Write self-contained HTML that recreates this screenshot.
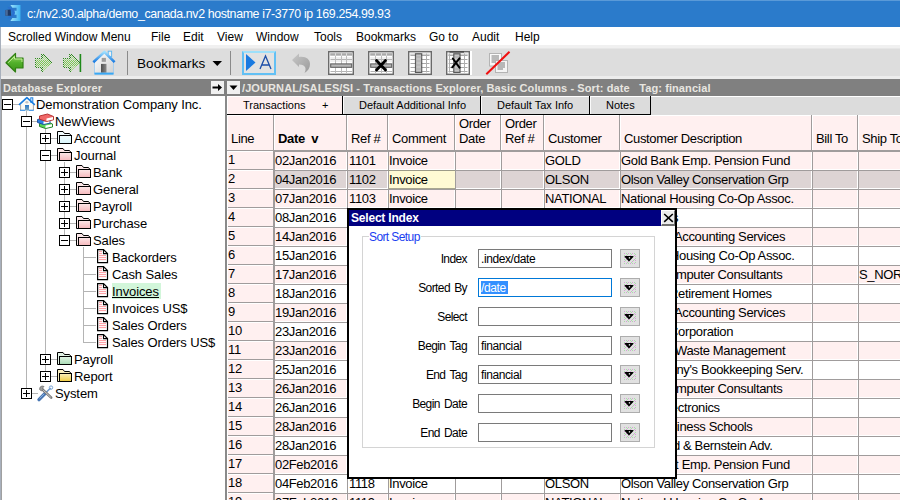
<!DOCTYPE html><html><head><meta charset="utf-8"><style>
*{margin:0;padding:0;box-sizing:border-box}
html,body{width:900px;height:500px;overflow:hidden;background:#fff;font-family:"Liberation Sans",sans-serif}
.a{position:absolute;white-space:nowrap}
svg{position:absolute;overflow:visible}
.t{font-size:13px;line-height:13px;color:#000;letter-spacing:-0.1px}
.c{font-size:13px;line-height:13px;color:#000;letter-spacing:-0.35px}
.tab{font-size:11px;line-height:11px;color:#000}
.lab{font-size:12px;line-height:12px;color:#000;letter-spacing:-0.6px}
</style></head><body>
<div class="a" style="left:0;top:0;width:900px;height:27px;background:#2b7bcb"></div>
<div class="a" style="left:27px;top:7.5px;font-size:12.4px;line-height:12px;color:#fff;letter-spacing:-0.38px;word-spacing:0px">c:/nv2.30.alpha/demo_canada.nv2 hostname i7-3770 ip 169.254.99.93</div>
<svg style="left:2px;top:2px" width="24" height="22" viewBox="0 0 24 22"><defs><linearGradient id="gi" x1="0" y1="0" x2="1" y2="0"><stop offset="0" stop-color="#a0e4fc"/><stop offset="1" stop-color="#3cb0f0"/></linearGradient></defs><path d="M8.4 3 H18.5 V19 H8.4 L10.4 16 H14.6 V12.8 H11.8 V8.8 H14.6 V5.7 H10.4Z" fill="url(#gi)"/><path d="M5.5 4.8 Q13 6.5 13 10.8 Q13 15 5.5 16.8 L7.2 14.4 Q10.6 13.4 10.6 10.8 Q10.6 8.2 7.2 7.4Z" fill="#2a70d0"/><path d="M3.5 8 L8.6 7.6 L9.2 13.7 L3.5 13.7Z" fill="#1e3864"/><path d="M3.5 8 L5.8 7.9 L5.8 13.7 L3.5 13.7Z" fill="#4a6a98"/></svg>
<div class="a" style="left:0;top:27px;width:900px;height:18px;background:#fff"></div>
<div class="a" style="left:8px;top:31px;font-size:12px;line-height:12px">Scrolled Window Menu</div>
<div class="a" style="left:151px;top:31px;font-size:12px;line-height:12px">File</div>
<div class="a" style="left:183px;top:31px;font-size:12px;line-height:12px">Edit</div>
<div class="a" style="left:217px;top:31px;font-size:12px;line-height:12px">View</div>
<div class="a" style="left:256px;top:31px;font-size:12px;line-height:12px">Window</div>
<div class="a" style="left:314px;top:31px;font-size:12px;line-height:12px">Tools</div>
<div class="a" style="left:356px;top:31px;font-size:12px;line-height:12px">Bookmarks</div>
<div class="a" style="left:429px;top:31px;font-size:12px;line-height:12px">Go to</div>
<div class="a" style="left:472px;top:31px;font-size:12px;line-height:12px">Audit</div>
<div class="a" style="left:515px;top:31px;font-size:12px;line-height:12px">Help</div>
<div class="a" style="left:0;top:45px;width:900px;height:34px;background:#dddddd"></div>
<div class="a" style="left:0;top:45px;width:900px;height:3px;background:#f0f0f0"></div><div class="a" style="left:0;top:48px;width:900px;height:1px;background:#e6e6e6"></div>
<div class="a" style="left:0;top:76px;width:900px;height:3px;background:#ececec"></div>
<svg style="left:5px;top:52px" width="20" height="22" viewBox="0 0 20 22"><defs><linearGradient id="gb" x1="0" y1="0" x2="0" y2="1"><stop offset="0" stop-color="#a8e070"/><stop offset="0.5" stop-color="#52b02a"/><stop offset="1" stop-color="#3a9418"/></linearGradient></defs><path d="M1 10.7 L10.5 1.5 V6 H18 V16 H10.5 V20 Z" fill="url(#gb)" stroke="#2f7f12" stroke-width="1.2" stroke-linejoin="round"/><path d="M3.2 10.7 L9.5 4.5 V7 H17 V10" fill="none" stroke="#c8f0a0" stroke-width="0.9"/></svg>
<svg style="left:35px;top:54px" width="20" height="20" viewBox="0 0 20 20"><rect x="6" y="0" width="1" height="1" fill="#2f8a1e"/><rect x="8" y="0" width="1" height="1" fill="#2f8a1e"/><rect x="7" y="1" width="1" height="1" fill="#2f8a1e"/><rect x="9" y="1" width="1" height="1" fill="#2f8a1e"/><rect x="6" y="2" width="1" height="1" fill="#2f8a1e"/><rect x="8" y="2" width="1" height="1" fill="#a8dc88"/><rect x="10" y="2" width="1" height="1" fill="#2f8a1e"/><rect x="7" y="3" width="1" height="1" fill="#2f8a1e"/><rect x="9" y="3" width="1" height="1" fill="#a8dc88"/><rect x="11" y="3" width="1" height="1" fill="#2f8a1e"/><rect x="0" y="4" width="1" height="1" fill="#2f8a1e"/><rect x="2" y="4" width="1" height="1" fill="#2f8a1e"/><rect x="4" y="4" width="1" height="1" fill="#2f8a1e"/><rect x="6" y="4" width="1" height="1" fill="#2f8a1e"/><rect x="8" y="4" width="1" height="1" fill="#a8dc88"/><rect x="10" y="4" width="1" height="1" fill="#a8dc88"/><rect x="12" y="4" width="1" height="1" fill="#2f8a1e"/><rect x="1" y="5" width="1" height="1" fill="#a8dc88"/><rect x="3" y="5" width="1" height="1" fill="#a8dc88"/><rect x="5" y="5" width="1" height="1" fill="#a8dc88"/><rect x="7" y="5" width="1" height="1" fill="#a8dc88"/><rect x="9" y="5" width="1" height="1" fill="#a8dc88"/><rect x="11" y="5" width="1" height="1" fill="#a8dc88"/><rect x="13" y="5" width="1" height="1" fill="#2f8a1e"/><rect x="0" y="6" width="1" height="1" fill="#2f8a1e"/><rect x="2" y="6" width="1" height="1" fill="#7ccc50"/><rect x="4" y="6" width="1" height="1" fill="#7ccc50"/><rect x="6" y="6" width="1" height="1" fill="#7ccc50"/><rect x="8" y="6" width="1" height="1" fill="#7ccc50"/><rect x="10" y="6" width="1" height="1" fill="#7ccc50"/><rect x="12" y="6" width="1" height="1" fill="#7ccc50"/><rect x="14" y="6" width="1" height="1" fill="#2f8a1e"/><rect x="1" y="7" width="1" height="1" fill="#7ccc50"/><rect x="3" y="7" width="1" height="1" fill="#7ccc50"/><rect x="5" y="7" width="1" height="1" fill="#7ccc50"/><rect x="7" y="7" width="1" height="1" fill="#7ccc50"/><rect x="9" y="7" width="1" height="1" fill="#7ccc50"/><rect x="11" y="7" width="1" height="1" fill="#7ccc50"/><rect x="13" y="7" width="1" height="1" fill="#7ccc50"/><rect x="15" y="7" width="1" height="1" fill="#2f8a1e"/><rect x="0" y="8" width="1" height="1" fill="#2f8a1e"/><rect x="2" y="8" width="1" height="1" fill="#7ccc50"/><rect x="4" y="8" width="1" height="1" fill="#7ccc50"/><rect x="6" y="8" width="1" height="1" fill="#7ccc50"/><rect x="8" y="8" width="1" height="1" fill="#7ccc50"/><rect x="10" y="8" width="1" height="1" fill="#7ccc50"/><rect x="12" y="8" width="1" height="1" fill="#7ccc50"/><rect x="14" y="8" width="1" height="1" fill="#7ccc50"/><rect x="16" y="8" width="1" height="1" fill="#2f8a1e"/><rect x="1" y="9" width="1" height="1" fill="#7ccc50"/><rect x="3" y="9" width="1" height="1" fill="#7ccc50"/><rect x="5" y="9" width="1" height="1" fill="#7ccc50"/><rect x="7" y="9" width="1" height="1" fill="#7ccc50"/><rect x="9" y="9" width="1" height="1" fill="#7ccc50"/><rect x="11" y="9" width="1" height="1" fill="#7ccc50"/><rect x="13" y="9" width="1" height="1" fill="#7ccc50"/><rect x="15" y="9" width="1" height="1" fill="#7ccc50"/><rect x="0" y="10" width="1" height="1" fill="#2f8a1e"/><rect x="2" y="10" width="1" height="1" fill="#7ccc50"/><rect x="4" y="10" width="1" height="1" fill="#7ccc50"/><rect x="6" y="10" width="1" height="1" fill="#7ccc50"/><rect x="8" y="10" width="1" height="1" fill="#7ccc50"/><rect x="10" y="10" width="1" height="1" fill="#7ccc50"/><rect x="12" y="10" width="1" height="1" fill="#7ccc50"/><rect x="14" y="10" width="1" height="1" fill="#7ccc50"/><rect x="1" y="11" width="1" height="1" fill="#7ccc50"/><rect x="3" y="11" width="1" height="1" fill="#7ccc50"/><rect x="5" y="11" width="1" height="1" fill="#7ccc50"/><rect x="7" y="11" width="1" height="1" fill="#7ccc50"/><rect x="9" y="11" width="1" height="1" fill="#7ccc50"/><rect x="11" y="11" width="1" height="1" fill="#7ccc50"/><rect x="13" y="11" width="1" height="1" fill="#7ccc50"/><rect x="0" y="12" width="1" height="1" fill="#2f8a1e"/><rect x="2" y="12" width="1" height="1" fill="#a8dc88"/><rect x="4" y="12" width="1" height="1" fill="#a8dc88"/><rect x="6" y="12" width="1" height="1" fill="#a8dc88"/><rect x="8" y="12" width="1" height="1" fill="#a8dc88"/><rect x="10" y="12" width="1" height="1" fill="#a8dc88"/><rect x="12" y="12" width="1" height="1" fill="#a8dc88"/><rect x="1" y="13" width="1" height="1" fill="#2f8a1e"/><rect x="3" y="13" width="1" height="1" fill="#2f8a1e"/><rect x="5" y="13" width="1" height="1" fill="#2f8a1e"/><rect x="7" y="13" width="1" height="1" fill="#2f8a1e"/><rect x="9" y="13" width="1" height="1" fill="#a8dc88"/><rect x="11" y="13" width="1" height="1" fill="#a8dc88"/><rect x="6" y="14" width="1" height="1" fill="#2f8a1e"/><rect x="8" y="14" width="1" height="1" fill="#a8dc88"/><rect x="10" y="14" width="1" height="1" fill="#a8dc88"/><rect x="7" y="15" width="1" height="1" fill="#2f8a1e"/><rect x="9" y="15" width="1" height="1" fill="#a8dc88"/><rect x="6" y="16" width="1" height="1" fill="#2f8a1e"/><rect x="8" y="16" width="1" height="1" fill="#a8dc88"/><rect x="7" y="17" width="1" height="1" fill="#2f8a1e"/></svg>
<svg style="left:63px;top:54px" width="20" height="20" viewBox="0 0 20 20"><rect x="6" y="0" width="1" height="1" fill="#2f8a1e"/><rect x="8" y="0" width="1" height="1" fill="#2f8a1e"/><rect x="7" y="1" width="1" height="1" fill="#2f8a1e"/><rect x="9" y="1" width="1" height="1" fill="#2f8a1e"/><rect x="6" y="2" width="1" height="1" fill="#2f8a1e"/><rect x="8" y="2" width="1" height="1" fill="#a8dc88"/><rect x="10" y="2" width="1" height="1" fill="#2f8a1e"/><rect x="7" y="3" width="1" height="1" fill="#2f8a1e"/><rect x="9" y="3" width="1" height="1" fill="#a8dc88"/><rect x="11" y="3" width="1" height="1" fill="#2f8a1e"/><rect x="0" y="4" width="1" height="1" fill="#2f8a1e"/><rect x="2" y="4" width="1" height="1" fill="#2f8a1e"/><rect x="4" y="4" width="1" height="1" fill="#2f8a1e"/><rect x="6" y="4" width="1" height="1" fill="#2f8a1e"/><rect x="8" y="4" width="1" height="1" fill="#a8dc88"/><rect x="10" y="4" width="1" height="1" fill="#a8dc88"/><rect x="12" y="4" width="1" height="1" fill="#2f8a1e"/><rect x="1" y="5" width="1" height="1" fill="#a8dc88"/><rect x="3" y="5" width="1" height="1" fill="#a8dc88"/><rect x="5" y="5" width="1" height="1" fill="#a8dc88"/><rect x="7" y="5" width="1" height="1" fill="#a8dc88"/><rect x="9" y="5" width="1" height="1" fill="#a8dc88"/><rect x="11" y="5" width="1" height="1" fill="#a8dc88"/><rect x="13" y="5" width="1" height="1" fill="#2f8a1e"/><rect x="0" y="6" width="1" height="1" fill="#2f8a1e"/><rect x="2" y="6" width="1" height="1" fill="#7ccc50"/><rect x="4" y="6" width="1" height="1" fill="#7ccc50"/><rect x="6" y="6" width="1" height="1" fill="#7ccc50"/><rect x="8" y="6" width="1" height="1" fill="#7ccc50"/><rect x="10" y="6" width="1" height="1" fill="#7ccc50"/><rect x="12" y="6" width="1" height="1" fill="#7ccc50"/><rect x="14" y="6" width="1" height="1" fill="#2f8a1e"/><rect x="1" y="7" width="1" height="1" fill="#7ccc50"/><rect x="3" y="7" width="1" height="1" fill="#7ccc50"/><rect x="5" y="7" width="1" height="1" fill="#7ccc50"/><rect x="7" y="7" width="1" height="1" fill="#7ccc50"/><rect x="9" y="7" width="1" height="1" fill="#7ccc50"/><rect x="11" y="7" width="1" height="1" fill="#7ccc50"/><rect x="13" y="7" width="1" height="1" fill="#7ccc50"/><rect x="15" y="7" width="1" height="1" fill="#2f8a1e"/><rect x="0" y="8" width="1" height="1" fill="#2f8a1e"/><rect x="2" y="8" width="1" height="1" fill="#7ccc50"/><rect x="4" y="8" width="1" height="1" fill="#7ccc50"/><rect x="6" y="8" width="1" height="1" fill="#7ccc50"/><rect x="8" y="8" width="1" height="1" fill="#7ccc50"/><rect x="10" y="8" width="1" height="1" fill="#7ccc50"/><rect x="12" y="8" width="1" height="1" fill="#7ccc50"/><rect x="14" y="8" width="1" height="1" fill="#7ccc50"/><rect x="16" y="8" width="1" height="1" fill="#2f8a1e"/><rect x="1" y="9" width="1" height="1" fill="#7ccc50"/><rect x="3" y="9" width="1" height="1" fill="#7ccc50"/><rect x="5" y="9" width="1" height="1" fill="#7ccc50"/><rect x="7" y="9" width="1" height="1" fill="#7ccc50"/><rect x="9" y="9" width="1" height="1" fill="#7ccc50"/><rect x="11" y="9" width="1" height="1" fill="#7ccc50"/><rect x="13" y="9" width="1" height="1" fill="#7ccc50"/><rect x="15" y="9" width="1" height="1" fill="#7ccc50"/><rect x="0" y="10" width="1" height="1" fill="#2f8a1e"/><rect x="2" y="10" width="1" height="1" fill="#7ccc50"/><rect x="4" y="10" width="1" height="1" fill="#7ccc50"/><rect x="6" y="10" width="1" height="1" fill="#7ccc50"/><rect x="8" y="10" width="1" height="1" fill="#7ccc50"/><rect x="10" y="10" width="1" height="1" fill="#7ccc50"/><rect x="12" y="10" width="1" height="1" fill="#7ccc50"/><rect x="14" y="10" width="1" height="1" fill="#7ccc50"/><rect x="1" y="11" width="1" height="1" fill="#7ccc50"/><rect x="3" y="11" width="1" height="1" fill="#7ccc50"/><rect x="5" y="11" width="1" height="1" fill="#7ccc50"/><rect x="7" y="11" width="1" height="1" fill="#7ccc50"/><rect x="9" y="11" width="1" height="1" fill="#7ccc50"/><rect x="11" y="11" width="1" height="1" fill="#7ccc50"/><rect x="13" y="11" width="1" height="1" fill="#7ccc50"/><rect x="0" y="12" width="1" height="1" fill="#2f8a1e"/><rect x="2" y="12" width="1" height="1" fill="#a8dc88"/><rect x="4" y="12" width="1" height="1" fill="#a8dc88"/><rect x="6" y="12" width="1" height="1" fill="#a8dc88"/><rect x="8" y="12" width="1" height="1" fill="#a8dc88"/><rect x="10" y="12" width="1" height="1" fill="#a8dc88"/><rect x="12" y="12" width="1" height="1" fill="#a8dc88"/><rect x="1" y="13" width="1" height="1" fill="#2f8a1e"/><rect x="3" y="13" width="1" height="1" fill="#2f8a1e"/><rect x="5" y="13" width="1" height="1" fill="#2f8a1e"/><rect x="7" y="13" width="1" height="1" fill="#2f8a1e"/><rect x="9" y="13" width="1" height="1" fill="#a8dc88"/><rect x="11" y="13" width="1" height="1" fill="#a8dc88"/><rect x="6" y="14" width="1" height="1" fill="#2f8a1e"/><rect x="8" y="14" width="1" height="1" fill="#a8dc88"/><rect x="10" y="14" width="1" height="1" fill="#a8dc88"/><rect x="7" y="15" width="1" height="1" fill="#2f8a1e"/><rect x="9" y="15" width="1" height="1" fill="#a8dc88"/><rect x="6" y="16" width="1" height="1" fill="#2f8a1e"/><rect x="8" y="16" width="1" height="1" fill="#a8dc88"/><rect x="7" y="17" width="1" height="1" fill="#2f8a1e"/><rect x="16.6" y="0" width="1.6" height="18" fill="#1f8a1a"/></svg>
<svg style="left:92px;top:50px" width="24" height="26" viewBox="0 0 24 26"><defs><linearGradient id="gw" x1="0" y1="0" x2="1" y2="1"><stop offset="0" stop-color="#ffffff"/><stop offset="1" stop-color="#cfcfcf"/></linearGradient><linearGradient id="gr" x1="0" y1="0" x2="0" y2="1"><stop offset="0" stop-color="#a0e0ff"/><stop offset="1" stop-color="#1a7ae0"/></linearGradient><linearGradient id="gdd" x1="0" y1="0" x2="1" y2="0"><stop offset="0" stop-color="#505050"/><stop offset="1" stop-color="#8a8a8a"/></linearGradient></defs><rect x="16.2" y="1.2" width="3.4" height="5.5" fill="#f0f0f0" stroke="#62b8f0" stroke-width="1"/><path d="M2.5 12 L12.4 3 L21.5 12 V24 H2.5Z" fill="url(#gw)" stroke="#9ccaf0" stroke-width="0.8"/><path d="M1.3 12.2 L12.4 1.9 L22.6 12.2" fill="none" stroke="url(#gr)" stroke-width="2.6" stroke-linejoin="round"/><rect x="9.7" y="7.9" width="4.2" height="3.9" fill="#9c9c9c"/><rect x="9" y="13.9" width="5.5" height="8.8" fill="url(#gdd)"/><path d="M2.5 23.6 H21.5" stroke="#3aa8f4" stroke-width="2"/></svg>
<div class="a" style="left:127px;top:51px;width:1px;height:24px;background:#8a8a8a"></div>
<div class="a" style="left:230px;top:51px;width:1px;height:24px;background:#8a8a8a"></div>
<div class="a" style="left:137px;top:57px;font-size:13.5px;line-height:13px;letter-spacing:0.1px;color:#000">Bookmarks</div>
<svg style="left:212px;top:60px" width="11" height="7" viewBox="0 0 11 7"><path d="M0.5 1 H10 L5.25 6Z" fill="#000"/></svg>
<div class="a" style="left:242px;top:51px;width:34px;height:24px;border:2px solid #62c0f4;border-top-color:#9ee0fa;background:#e2e2e2"></div>
<svg style="left:245px;top:53px" width="30" height="20" viewBox="0 0 30 20"><path d="M1 1 L10.5 9.5 L1 18Z" fill="#1a7ae0"/><path d="M15 16 L20.5 3 L26 16 M16.8 12 H24.2" fill="none" stroke="#1c4ea8" stroke-width="1.3"/></svg>
<svg style="left:291px;top:52px" width="21" height="22" viewBox="0 0 21 22"><defs><linearGradient id="gu" x1="0" y1="0" x2="1" y2="1"><stop offset="0" stop-color="#c8c8c8"/><stop offset="1" stop-color="#9a9a9a"/></linearGradient></defs><path d="M1 8 L8 1.5 V5 C15 4 19 7.5 19 12 C19 16 17 19 13.5 21 C15.5 17 15 12.5 8 12.5 V15Z" fill="url(#gu)"/></svg>
<svg style="left:328px;top:51px" width="26" height="24" viewBox="0 0 26 24"><rect x="0.7" y="0.7" width="24.6" height="22.6" fill="#fff" stroke="#6a6a6a" stroke-width="1.4"/><rect x="2.2" y="6" width="22" height="5" fill="#f0f0f0"/><rect x="2.2" y="2.2" width="22" height="2.5" fill="#a8a8a8"/><path d="M2.5 8.5 H24" stroke="#b4b4b4" stroke-width="1"/><path d="M2.5 20.5 H24" stroke="#b4b4b4" stroke-width="1"/><path d="M7.5 4.7 V22" stroke="#bcbcbc" stroke-width="1"/><path d="M7.5 2.2 V4.7" stroke="#e0e0e0" stroke-width="1"/><path d="M13.5 4.7 V22" stroke="#bcbcbc" stroke-width="1"/><path d="M13.5 2.2 V4.7" stroke="#e0e0e0" stroke-width="1"/><path d="M18.5 4.7 V22" stroke="#bcbcbc" stroke-width="1"/><path d="M18.5 2.2 V4.7" stroke="#e0e0e0" stroke-width="1"/><rect x="2.7" y="12.9" width="21" height="3.4" fill="#b8b8b8" stroke="#606060" stroke-width="1.1"/></svg>
<svg style="left:368px;top:51px" width="26" height="24" viewBox="0 0 26 24"><rect x="0.7" y="0.7" width="24.6" height="22.6" fill="#fff" stroke="#6a6a6a" stroke-width="1.4"/><rect x="2.2" y="6" width="22" height="5" fill="#f0f0f0"/><rect x="2.2" y="2.2" width="22" height="2.5" fill="#a8a8a8"/><path d="M2.5 8.5 H24" stroke="#b4b4b4" stroke-width="1"/><path d="M2.5 20.5 H24" stroke="#b4b4b4" stroke-width="1"/><path d="M7.5 4.7 V22" stroke="#bcbcbc" stroke-width="1"/><path d="M7.5 2.2 V4.7" stroke="#e0e0e0" stroke-width="1"/><path d="M13.5 4.7 V22" stroke="#bcbcbc" stroke-width="1"/><path d="M13.5 2.2 V4.7" stroke="#e0e0e0" stroke-width="1"/><path d="M18.5 4.7 V22" stroke="#bcbcbc" stroke-width="1"/><path d="M18.5 2.2 V4.7" stroke="#e0e0e0" stroke-width="1"/><rect x="2.7" y="12.9" width="21" height="3.4" fill="#b8b8b8" stroke="#606060" stroke-width="1.1"/><path d="M8.5 9.5 L17.5 19 M17.5 9.5 L8.5 19" stroke="#000" stroke-width="2.8" stroke-linecap="round"/></svg>
<svg style="left:408px;top:51px" width="26" height="24" viewBox="0 0 26 24"><rect x="0.7" y="0.7" width="22.6" height="22.6" fill="#fff" stroke="#6a6a6a" stroke-width="1.4"/><rect x="2.2" y="2.5" width="19.6" height="2" fill="#d4d4d4"/><path d="M2.5 4.5 H21.5" stroke="#a8a8a8" stroke-width="1"/><path d="M2.5 8.5 H21.5" stroke="#a8a8a8" stroke-width="1"/><path d="M2.5 12.5 H21.5" stroke="#a8a8a8" stroke-width="1"/><path d="M2.5 16.5 H21.5" stroke="#a8a8a8" stroke-width="1"/><path d="M2.5 20.5 H21.5" stroke="#a8a8a8" stroke-width="1"/><path d="M18.5 2.5 V21.5" stroke="#b0b0b0" stroke-width="1"/><rect x="7.5" y="2.8" width="6.2" height="18.6" fill="#c4c4c4" stroke="#5a5a5a" stroke-width="1.2"/><path d="M7.5 6 H13.7" stroke="#a0a0a0" stroke-width="0.6"/><path d="M7.5 10 H13.7" stroke="#a0a0a0" stroke-width="0.6"/><path d="M7.5 14 H13.7" stroke="#a0a0a0" stroke-width="0.6"/><path d="M7.5 18 H13.7" stroke="#a0a0a0" stroke-width="0.6"/></svg>
<svg style="left:446px;top:51px" width="26" height="24" viewBox="0 0 26 24"><rect x="0.7" y="0.7" width="22.6" height="22.6" fill="#fff" stroke="#6a6a6a" stroke-width="1.4"/><rect x="2.2" y="2.5" width="19.6" height="2" fill="#d4d4d4"/><path d="M2.5 4.5 H21.5" stroke="#a8a8a8" stroke-width="1"/><path d="M2.5 8.5 H21.5" stroke="#a8a8a8" stroke-width="1"/><path d="M2.5 12.5 H21.5" stroke="#a8a8a8" stroke-width="1"/><path d="M2.5 16.5 H21.5" stroke="#a8a8a8" stroke-width="1"/><path d="M2.5 20.5 H21.5" stroke="#a8a8a8" stroke-width="1"/><path d="M3.5 2.5 V21.5" stroke="#b0b0b0" stroke-width="1"/><path d="M18.5 2.5 V21.5" stroke="#b0b0b0" stroke-width="1"/><rect x="7.8" y="2.8" width="6.2" height="18.6" fill="#c4c4c4" stroke="#5a5a5a" stroke-width="1.2"/><path d="M7.8 6 H14.0" stroke="#a0a0a0" stroke-width="0.6"/><path d="M7.8 10 H14.0" stroke="#a0a0a0" stroke-width="0.6"/><path d="M7.8 14 H14.0" stroke="#a0a0a0" stroke-width="0.6"/><path d="M7.8 18 H14.0" stroke="#a0a0a0" stroke-width="0.6"/><rect x="3.5" y="0.3" width="14.5" height="1.3" fill="#404040"/><path d="M6.8 7.5 L13.5 16.6 M13.5 7.3 L6.2 16.3" stroke="#000" stroke-width="2" stroke-linecap="round"/></svg>
<div class="a" style="left:470px;top:51px;width:2px;height:24px;background:#fff"></div>
<svg style="left:485px;top:50px" width="26" height="26" viewBox="0 0 26 26"><rect x="4.5" y="3.5" width="12" height="12.5" fill="#fafafa" stroke="#b4b4b4" stroke-width="1"/><path d="M6.5 6 H14 M6.5 8 H14 M6.5 10 H14 M6.5 12 H12" stroke="#7a7a7a" stroke-width="1"/><rect x="10.5" y="10.5" width="12" height="12" fill="#f4f4f4" stroke="#b4b4b4" stroke-width="1"/><path d="M12.5 13 H20 M12.5 15 H20 M12.5 17 H20 M12.5 19 H18" stroke="#7a7a7a" stroke-width="1"/><path d="M1.3 24.3 L24.5 1.8" stroke="#f01010" stroke-width="2"/></svg>
<div class="a" style="left:0;top:79px;width:900px;height:17px;background:#808080"></div>
<div class="a" style="left:3px;top:83px;font-size:11px;line-height:11px;font-weight:bold;color:#e8e6e0;letter-spacing:0.15px">Database Explorer</div>
<div class="a" style="left:242px;top:83px;font-size:11px;line-height:11px;font-weight:bold;color:#e8e6e0;letter-spacing:0.1px">/JOURNAL/SALES/SI - Transactions Explorer, Basic Columns - Sort: date&nbsp;&nbsp; Tag: financial</div>
<div class="a" style="left:211px;top:81px;width:13px;height:13px;background:#f0f0f0"></div>
<svg style="left:211px;top:81px" width="13" height="13" viewBox="0 0 13 13"><path d="M1.5 5.5 H7 V3 L11 6.5 L7 10 V7.5 H1.5Z" fill="#000"/></svg>
<div class="a" style="left:227px;top:81px;width:13px;height:13px;background:#f0f0f0"></div>
<svg style="left:227px;top:81px" width="13" height="13" viewBox="0 0 13 13"><path d="M2.5 4.5 H10.5 L6.5 9Z" fill="#000"/></svg>
<div class="a" style="left:1px;top:96px;width:1px;height:404px;background:#a0a0a0"></div>
<div class="a" style="left:225px;top:96px;width:2px;height:404px;background:#8a8a8a"></div>
<div class="a" style="left:26px;top:111px;width:1px;height:283px;background:#b4b4b4"></div>
<div class="a" style="left:45px;top:128px;width:1px;height:249px;background:#b4b4b4"></div>
<div class="a" style="left:64px;top:162px;width:1px;height:79px;background:#b4b4b4"></div>
<div class="a" style="left:83px;top:247px;width:1px;height:96px;background:#b4b4b4"></div>
<div class="a" style="left:13px;top:104px;width:6px;height:1px;background:#b4b4b4"></div>
<div class="a t" style="left:36px;top:98px">Demonstration Company Inc.</div>
<div class="a" style="left:2px;top:99px;width:11px;height:11px;border:1px solid #000;background:#fff"></div>
<div class="a" style="left:4px;top:104px;width:7px;height:1px;background:#000"></div>
<svg style="left:17px;top:95px" width="20" height="18" viewBox="0 0 20 18"><defs><linearGradient id="gd" x1="0" y1="0" x2="0" y2="1"><stop offset="0" stop-color="#2a78c8"/><stop offset="1" stop-color="#7aa8c0"/></linearGradient></defs><path d="M3.6 9 V15 H16.4 V9 L9.9 3Z" fill="#fafaf6"/><path d="M3.6 9.5 V15 M16.4 9.5 V15" stroke="#a8a8a8" stroke-width="1"/><rect x="13.8" y="2.8" width="2" height="4.5" fill="#fff" stroke="#1a7ee0" stroke-width="1"/><path d="M2 9.8 L9.9 2.6 L17.8 9.8" fill="none" stroke="#1a7ee0" stroke-width="1.6" stroke-linejoin="round"/><ellipse cx="9.9" cy="7.3" rx="1.5" ry="1.3" fill="#c4c4c4"/><rect x="8" y="10" width="4" height="5.6" fill="url(#gd)"/><path d="M3 15.3 H8 M12 15.3 H16.8" stroke="#1a7ee0" stroke-width="1.1"/></svg>
<div class="a" style="left:32px;top:121px;width:6px;height:1px;background:#b4b4b4"></div>
<div class="a t" style="left:55px;top:115px">NewViews</div>
<div class="a" style="left:21px;top:116px;width:11px;height:11px;border:1px solid #000;background:#fff"></div>
<div class="a" style="left:23px;top:121px;width:7px;height:1px;background:#000"></div>
<svg style="left:36px;top:112px" width="20" height="18" viewBox="0 0 20 18"><path d="M3.5 11.5 L11.5 10 L16.5 12 V15 L9.5 16.5 L3.5 14.5Z" fill="#56d456" stroke="#1e7a22" stroke-width="0.9" stroke-linejoin="round"/><path d="M9.5 13.5 L16 12.2 V14.6 L9.5 16Z" fill="#fff"/><path d="M1.5 7.5 L9 6 L14 8.2 V11 L7.5 12.5 L1.5 10.5Z" fill="#2a7ee0" stroke="#184a9a" stroke-width="0.9" stroke-linejoin="round"/><path d="M7.5 9.6 L13.5 8.4 V10.7 L7.5 12Z" fill="#fff"/><path d="M3.5 4 L11.5 2 L17.5 4.5 V7.8 L10.5 9.5 L3.5 7.2Z" fill="#f06868" stroke="#b02828" stroke-width="0.9" stroke-linejoin="round"/><path d="M10.5 6.5 L17 4.9 V7.5 L10.5 9Z" fill="#fff"/></svg>
<div class="a" style="left:51px;top:138px;width:6px;height:1px;background:#b4b4b4"></div>
<div class="a t" style="left:74px;top:132px">Account</div>
<div class="a" style="left:40px;top:133px;width:11px;height:11px;border:1px solid #000;background:#fff"></div>
<div class="a" style="left:42px;top:138px;width:7px;height:1px;background:#000"></div>
<div class="a" style="left:45px;top:135px;width:1px;height:7px;background:#000"></div>
<svg style="left:57px;top:130px" width="17" height="15" viewBox="0 0 17 15"><defs><linearGradient id="gd8f6fc" x1="0" y1="0" x2="0" y2="1"><stop offset="0" stop-color="#f2fcfe"/><stop offset="1" stop-color="#d8f6fc"/></linearGradient></defs><path d="M0.5 13.5 V1.5 H6 L7.5 3.5 H12.5 L14 5.5" fill="#f2fcfe" stroke="#000" stroke-width="1"/><rect x="2.5" y="5.5" width="12" height="8" fill="url(#gd8f6fc)" stroke="#000" stroke-width="1"/><path d="M0.5 13.5 H14.5" stroke="#000" stroke-width="1"/></svg>
<div class="a" style="left:51px;top:155px;width:6px;height:1px;background:#b4b4b4"></div>
<div class="a t" style="left:74px;top:149px">Journal</div>
<div class="a" style="left:40px;top:150px;width:11px;height:11px;border:1px solid #000;background:#fff"></div>
<div class="a" style="left:42px;top:155px;width:7px;height:1px;background:#000"></div>
<svg style="left:57px;top:147px" width="17" height="15" viewBox="0 0 17 15"><defs><linearGradient id="gf6b8bc" x1="0" y1="0" x2="0" y2="1"><stop offset="0" stop-color="#fce7e8"/><stop offset="1" stop-color="#f6b8bc"/></linearGradient></defs><path d="M0.5 13.5 V1.5 H6 L7.5 3.5 H12.5 L14 5.5" fill="#fce7e8" stroke="#000" stroke-width="1"/><rect x="2.5" y="5.5" width="12" height="8" fill="url(#gf6b8bc)" stroke="#000" stroke-width="1"/><path d="M0.5 13.5 H14.5" stroke="#000" stroke-width="1"/></svg>
<div class="a" style="left:70px;top:172px;width:6px;height:1px;background:#b4b4b4"></div>
<div class="a t" style="left:93px;top:166px">Bank</div>
<div class="a" style="left:59px;top:167px;width:11px;height:11px;border:1px solid #000;background:#fff"></div>
<div class="a" style="left:61px;top:172px;width:7px;height:1px;background:#000"></div>
<div class="a" style="left:64px;top:169px;width:1px;height:7px;background:#000"></div>
<svg style="left:76px;top:164px" width="17" height="15" viewBox="0 0 17 15"><defs><linearGradient id="gf6b8bc" x1="0" y1="0" x2="0" y2="1"><stop offset="0" stop-color="#fce7e8"/><stop offset="1" stop-color="#f6b8bc"/></linearGradient></defs><path d="M0.5 13.5 V1.5 H6 L7.5 3.5 H12.5 L14 5.5" fill="#fce7e8" stroke="#000" stroke-width="1"/><rect x="2.5" y="5.5" width="12" height="8" fill="url(#gf6b8bc)" stroke="#000" stroke-width="1"/><path d="M0.5 13.5 H14.5" stroke="#000" stroke-width="1"/></svg>
<div class="a" style="left:70px;top:189px;width:6px;height:1px;background:#b4b4b4"></div>
<div class="a t" style="left:93px;top:183px">General</div>
<div class="a" style="left:59px;top:184px;width:11px;height:11px;border:1px solid #000;background:#fff"></div>
<div class="a" style="left:61px;top:189px;width:7px;height:1px;background:#000"></div>
<div class="a" style="left:64px;top:186px;width:1px;height:7px;background:#000"></div>
<svg style="left:76px;top:181px" width="17" height="15" viewBox="0 0 17 15"><defs><linearGradient id="gf6b8bc" x1="0" y1="0" x2="0" y2="1"><stop offset="0" stop-color="#fce7e8"/><stop offset="1" stop-color="#f6b8bc"/></linearGradient></defs><path d="M0.5 13.5 V1.5 H6 L7.5 3.5 H12.5 L14 5.5" fill="#fce7e8" stroke="#000" stroke-width="1"/><rect x="2.5" y="5.5" width="12" height="8" fill="url(#gf6b8bc)" stroke="#000" stroke-width="1"/><path d="M0.5 13.5 H14.5" stroke="#000" stroke-width="1"/></svg>
<div class="a" style="left:70px;top:206px;width:6px;height:1px;background:#b4b4b4"></div>
<div class="a t" style="left:93px;top:200px">Payroll</div>
<div class="a" style="left:59px;top:201px;width:11px;height:11px;border:1px solid #000;background:#fff"></div>
<div class="a" style="left:61px;top:206px;width:7px;height:1px;background:#000"></div>
<div class="a" style="left:64px;top:203px;width:1px;height:7px;background:#000"></div>
<svg style="left:76px;top:198px" width="17" height="15" viewBox="0 0 17 15"><defs><linearGradient id="gf6b8bc" x1="0" y1="0" x2="0" y2="1"><stop offset="0" stop-color="#fce7e8"/><stop offset="1" stop-color="#f6b8bc"/></linearGradient></defs><path d="M0.5 13.5 V1.5 H6 L7.5 3.5 H12.5 L14 5.5" fill="#fce7e8" stroke="#000" stroke-width="1"/><rect x="2.5" y="5.5" width="12" height="8" fill="url(#gf6b8bc)" stroke="#000" stroke-width="1"/><path d="M0.5 13.5 H14.5" stroke="#000" stroke-width="1"/></svg>
<div class="a" style="left:70px;top:223px;width:6px;height:1px;background:#b4b4b4"></div>
<div class="a t" style="left:93px;top:217px">Purchase</div>
<div class="a" style="left:59px;top:218px;width:11px;height:11px;border:1px solid #000;background:#fff"></div>
<div class="a" style="left:61px;top:223px;width:7px;height:1px;background:#000"></div>
<div class="a" style="left:64px;top:220px;width:1px;height:7px;background:#000"></div>
<svg style="left:76px;top:215px" width="17" height="15" viewBox="0 0 17 15"><defs><linearGradient id="gf6b8bc" x1="0" y1="0" x2="0" y2="1"><stop offset="0" stop-color="#fce7e8"/><stop offset="1" stop-color="#f6b8bc"/></linearGradient></defs><path d="M0.5 13.5 V1.5 H6 L7.5 3.5 H12.5 L14 5.5" fill="#fce7e8" stroke="#000" stroke-width="1"/><rect x="2.5" y="5.5" width="12" height="8" fill="url(#gf6b8bc)" stroke="#000" stroke-width="1"/><path d="M0.5 13.5 H14.5" stroke="#000" stroke-width="1"/></svg>
<div class="a" style="left:70px;top:240px;width:6px;height:1px;background:#b4b4b4"></div>
<div class="a t" style="left:93px;top:234px">Sales</div>
<div class="a" style="left:59px;top:235px;width:11px;height:11px;border:1px solid #000;background:#fff"></div>
<div class="a" style="left:61px;top:240px;width:7px;height:1px;background:#000"></div>
<svg style="left:76px;top:232px" width="17" height="15" viewBox="0 0 17 15"><defs><linearGradient id="gf6b8bc" x1="0" y1="0" x2="0" y2="1"><stop offset="0" stop-color="#fce7e8"/><stop offset="1" stop-color="#f6b8bc"/></linearGradient></defs><path d="M0.5 13.5 V1.5 H6 L7.5 3.5 H12.5 L14 5.5" fill="#fce7e8" stroke="#000" stroke-width="1"/><rect x="2.5" y="5.5" width="12" height="8" fill="url(#gf6b8bc)" stroke="#000" stroke-width="1"/><path d="M0.5 13.5 H14.5" stroke="#000" stroke-width="1"/></svg>
<div class="a" style="left:84px;top:257px;width:12px;height:1px;background:#b4b4b4"></div>
<div class="a t" style="left:112px;top:251px">Backorders</div>
<svg style="left:97px;top:249px" width="12" height="15" viewBox="0 0 12 15"><path d="M0.6 0.6 H6.5 L10.5 4.6 V13.6 H0.6Z" fill="#fff" stroke="#000" stroke-width="1.2"/><path d="M6.5 0.6 V4.6 H10.5" fill="none" stroke="#000" stroke-width="1.1"/><path d="M2 2.6 H5 M2 4.6 H5 M2 6.6 H9 M2 8.6 H9 M2 10.6 H9" stroke="#ff9aa0" stroke-width="1"/></svg>
<div class="a" style="left:84px;top:274px;width:12px;height:1px;background:#b4b4b4"></div>
<div class="a t" style="left:112px;top:268px">Cash Sales</div>
<svg style="left:97px;top:266px" width="12" height="15" viewBox="0 0 12 15"><path d="M0.6 0.6 H6.5 L10.5 4.6 V13.6 H0.6Z" fill="#fff" stroke="#000" stroke-width="1.2"/><path d="M6.5 0.6 V4.6 H10.5" fill="none" stroke="#000" stroke-width="1.1"/><path d="M2 2.6 H5 M2 4.6 H5 M2 6.6 H9 M2 8.6 H9 M2 10.6 H9" stroke="#ff9aa0" stroke-width="1"/></svg>
<div class="a" style="left:84px;top:291px;width:12px;height:1px;background:#b4b4b4"></div>
<div class="a" style="left:112px;top:283px;width:49px;height:16px;background:#d2f6da"></div>
<div class="a" style="left:112px;top:297px;width:47px;height:1px;background:#000"></div>
<div class="a t" style="left:112px;top:285px">Invoices</div>
<svg style="left:97px;top:283px" width="12" height="15" viewBox="0 0 12 15"><path d="M0.6 0.6 H6.5 L10.5 4.6 V13.6 H0.6Z" fill="#fff" stroke="#000" stroke-width="1.2"/><path d="M6.5 0.6 V4.6 H10.5" fill="none" stroke="#000" stroke-width="1.1"/><path d="M2 2.6 H5 M2 4.6 H5 M2 6.6 H9 M2 8.6 H9 M2 10.6 H9" stroke="#ff9aa0" stroke-width="1"/></svg>
<div class="a" style="left:84px;top:308px;width:12px;height:1px;background:#b4b4b4"></div>
<div class="a t" style="left:112px;top:302px">Invoices US$</div>
<svg style="left:97px;top:300px" width="12" height="15" viewBox="0 0 12 15"><path d="M0.6 0.6 H6.5 L10.5 4.6 V13.6 H0.6Z" fill="#fff" stroke="#000" stroke-width="1.2"/><path d="M6.5 0.6 V4.6 H10.5" fill="none" stroke="#000" stroke-width="1.1"/><path d="M2 2.6 H5 M2 4.6 H5 M2 6.6 H9 M2 8.6 H9 M2 10.6 H9" stroke="#ff9aa0" stroke-width="1"/></svg>
<div class="a" style="left:84px;top:325px;width:12px;height:1px;background:#b4b4b4"></div>
<div class="a t" style="left:112px;top:319px">Sales Orders</div>
<svg style="left:97px;top:317px" width="12" height="15" viewBox="0 0 12 15"><path d="M0.6 0.6 H6.5 L10.5 4.6 V13.6 H0.6Z" fill="#fff" stroke="#000" stroke-width="1.2"/><path d="M6.5 0.6 V4.6 H10.5" fill="none" stroke="#000" stroke-width="1.1"/><path d="M2 2.6 H5 M2 4.6 H5 M2 6.6 H9 M2 8.6 H9 M2 10.6 H9" stroke="#ff9aa0" stroke-width="1"/></svg>
<div class="a" style="left:84px;top:342px;width:12px;height:1px;background:#b4b4b4"></div>
<div class="a t" style="left:112px;top:336px">Sales Orders US$</div>
<svg style="left:97px;top:334px" width="12" height="15" viewBox="0 0 12 15"><path d="M0.6 0.6 H6.5 L10.5 4.6 V13.6 H0.6Z" fill="#fff" stroke="#000" stroke-width="1.2"/><path d="M6.5 0.6 V4.6 H10.5" fill="none" stroke="#000" stroke-width="1.1"/><path d="M2 2.6 H5 M2 4.6 H5 M2 6.6 H9 M2 8.6 H9 M2 10.6 H9" stroke="#ff9aa0" stroke-width="1"/></svg>
<div class="a" style="left:51px;top:359px;width:6px;height:1px;background:#b4b4b4"></div>
<div class="a t" style="left:74px;top:353px">Payroll</div>
<div class="a" style="left:40px;top:354px;width:11px;height:11px;border:1px solid #000;background:#fff"></div>
<div class="a" style="left:42px;top:359px;width:7px;height:1px;background:#000"></div>
<div class="a" style="left:45px;top:356px;width:1px;height:7px;background:#000"></div>
<svg style="left:57px;top:351px" width="17" height="15" viewBox="0 0 17 15"><defs><linearGradient id="ga8dcb4" x1="0" y1="0" x2="0" y2="1"><stop offset="0" stop-color="#e2f3e6"/><stop offset="1" stop-color="#a8dcb4"/></linearGradient></defs><path d="M0.5 13.5 V1.5 H6 L7.5 3.5 H12.5 L14 5.5" fill="#e2f3e6" stroke="#000" stroke-width="1"/><rect x="2.5" y="5.5" width="12" height="8" fill="url(#ga8dcb4)" stroke="#000" stroke-width="1"/><path d="M0.5 13.5 H14.5" stroke="#000" stroke-width="1"/></svg>
<div class="a" style="left:51px;top:376px;width:6px;height:1px;background:#b4b4b4"></div>
<div class="a t" style="left:74px;top:370px">Report</div>
<div class="a" style="left:40px;top:371px;width:11px;height:11px;border:1px solid #000;background:#fff"></div>
<div class="a" style="left:42px;top:376px;width:7px;height:1px;background:#000"></div>
<div class="a" style="left:45px;top:373px;width:1px;height:7px;background:#000"></div>
<svg style="left:57px;top:368px" width="17" height="15" viewBox="0 0 17 15"><defs><linearGradient id="gf0cc40" x1="0" y1="0" x2="0" y2="1"><stop offset="0" stop-color="#faeebf"/><stop offset="1" stop-color="#f0cc40"/></linearGradient></defs><path d="M0.5 13.5 V1.5 H6 L7.5 3.5 H12.5 L14 5.5" fill="#faeebf" stroke="#000" stroke-width="1"/><rect x="2.5" y="5.5" width="12" height="8" fill="url(#gf0cc40)" stroke="#000" stroke-width="1"/><path d="M0.5 13.5 H14.5" stroke="#000" stroke-width="1"/></svg>
<div class="a" style="left:32px;top:393px;width:6px;height:1px;background:#b4b4b4"></div>
<div class="a t" style="left:55px;top:387px">System</div>
<div class="a" style="left:21px;top:388px;width:11px;height:11px;border:1px solid #000;background:#fff"></div>
<div class="a" style="left:23px;top:393px;width:7px;height:1px;background:#000"></div>
<div class="a" style="left:26px;top:390px;width:1px;height:7px;background:#000"></div>
<svg style="left:38px;top:385px" width="15" height="16" viewBox="0 0 15 16"><path d="M1 14.6 L6.8 8.8" stroke="#4a78b4" stroke-width="3.4" stroke-linecap="round"/><path d="M1.6 13.4 L6 9" stroke="#9cc0e8" stroke-width="0.8"/><path d="M6.8 8.8 L12.6 3" stroke="#6a98cc" stroke-width="1.6"/><circle cx="13" cy="2.6" r="1.7" fill="none" stroke="#7aa4d4" stroke-width="1"/><path d="M4.5 4.5 L13.2 12.6" stroke="#7a7a7a" stroke-width="2.6" stroke-linecap="round"/><path d="M4.8 4.8 L12.8 12.3" stroke="#e0e0e0" stroke-width="0.8"/><path d="M6 1.5 L4.5 3 L5.5 4.8 L3.2 5.8 L1.6 4.5 L2 2.2 L4 1Z" fill="#a0a0a0" stroke="#707070" stroke-width="0.8"/></svg>
<div class="a" style="left:227px;top:96px;width:673px;height:404px;background:#fff0f0"></div>
<div class="a" style="left:227px;top:96px;width:673px;height:1px;background:#fff"></div>
<div class="a" style="left:227px;top:96px;width:1px;height:18px;background:#fff"></div>
<div class="a" style="left:343px;top:97px;width:557px;height:18px;background:#dcdcdc"></div>
<div class="a" style="left:228px;top:97px;width:114px;height:17px;background:#fff0f0"></div>
<div class="a" style="left:227px;top:114px;width:424px;height:1px;background:#000"></div>
<div class="a" style="left:342px;top:96px;width:1px;height:19px;background:#000"></div>
<div class="a" style="left:480px;top:96px;width:1px;height:19px;background:#000"></div>
<div class="a" style="left:589px;top:96px;width:1px;height:19px;background:#000"></div>
<div class="a" style="left:650px;top:96px;width:1px;height:19px;background:#000"></div>
<div class="a" style="left:343px;top:96px;width:1px;height:18px;background:#fafafa"></div>
<div class="a" style="left:481px;top:96px;width:1px;height:18px;background:#fafafa"></div>
<div class="a" style="left:590px;top:96px;width:1px;height:18px;background:#fafafa"></div>
<div class="a" style="left:651px;top:115px;width:249px;height:1px;background:#fff0f0"></div>
<div class="a tab" style="left:243px;top:100px">Transactions</div>
<div class="a tab" style="left:322px;top:100px">+</div>
<div class="a tab" style="left:359px;top:100px">Default Additional Info</div>
<div class="a tab" style="left:497px;top:100px">Default Tax Info</div>
<div class="a tab" style="left:606px;top:100px">Notes</div>
<div class="a" style="left:227px;top:115px;width:673px;height:1px;background:#ffffff"></div>
<div class="a" style="left:227px;top:150px;width:673px;height:1px;background:#a09c9c"></div>
<div class="a" style="left:227px;top:115px;width:1px;height:35px;background:#ffffff"></div>
<div class="a" style="left:273px;top:115px;width:1px;height:36px;background:#a09c9c"></div>
<div class="a" style="left:274px;top:115px;width:1px;height:35px;background:#ffffff"></div>
<div class="a" style="left:346px;top:115px;width:1px;height:36px;background:#a09c9c"></div>
<div class="a" style="left:347px;top:115px;width:1px;height:35px;background:#ffffff"></div>
<div class="a" style="left:387px;top:115px;width:1px;height:36px;background:#a09c9c"></div>
<div class="a" style="left:388px;top:115px;width:1px;height:35px;background:#ffffff"></div>
<div class="a" style="left:454px;top:115px;width:1px;height:36px;background:#a09c9c"></div>
<div class="a" style="left:455px;top:115px;width:1px;height:35px;background:#ffffff"></div>
<div class="a" style="left:500px;top:115px;width:1px;height:36px;background:#a09c9c"></div>
<div class="a" style="left:501px;top:115px;width:1px;height:35px;background:#ffffff"></div>
<div class="a" style="left:543px;top:115px;width:1px;height:36px;background:#a09c9c"></div>
<div class="a" style="left:544px;top:115px;width:1px;height:35px;background:#ffffff"></div>
<div class="a" style="left:619px;top:115px;width:1px;height:36px;background:#a09c9c"></div>
<div class="a" style="left:620px;top:115px;width:1px;height:35px;background:#ffffff"></div>
<div class="a" style="left:811px;top:115px;width:1px;height:36px;background:#a09c9c"></div>
<div class="a" style="left:812px;top:115px;width:1px;height:35px;background:#ffffff"></div>
<div class="a" style="left:857px;top:115px;width:1px;height:36px;background:#a09c9c"></div>
<div class="a" style="left:858px;top:115px;width:1px;height:35px;background:#ffffff"></div>
<div class="a c" style="left:231px;top:132px">Line</div>
<div class="a c" style="left:278px;top:132px"><b>Date&nbsp; v</b></div>
<div class="a c" style="left:351px;top:132px">Ref #</div>
<div class="a c" style="left:392px;top:132px">Comment</div>
<div class="a c" style="left:459px;top:132px">Date</div>
<div class="a c" style="left:459px;top:117px">Order</div>
<div class="a c" style="left:505px;top:132px">Ref #</div>
<div class="a c" style="left:505px;top:117px">Order</div>
<div class="a c" style="left:548px;top:132px">Customer</div>
<div class="a c" style="left:624px;top:132px">Customer Description</div>
<div class="a c" style="left:816px;top:132px">Bill To</div>
<div class="a c" style="left:862px;top:132px">Ship To</div>
<div class="a" style="left:273px;top:151px;width:1px;height:349px;background:#a09c9c"></div>
<div class="a" style="left:227px;top:151px;width:1px;height:349px;background:#ffffff"></div>
<div class="a" style="left:228px;top:151px;width:45px;height:1px;background:#ffffff"></div>
<div class="a" style="left:228px;top:169px;width:45px;height:1px;background:#a09c9c"></div>
<div class="a" style="left:274px;top:151px;width:626px;height:1px;background:#a09c9c"></div>
<div class="a" style="left:274px;top:151px;width:1px;height:19px;background:#a09c9c"></div>
<div class="a" style="left:275px;top:169px;width:71px;height:1px;background:#ffffff"></div>
<div class="a" style="left:346px;top:152px;width:1px;height:18px;background:#ffffff"></div>
<div class="a" style="left:347px;top:151px;width:1px;height:19px;background:#a09c9c"></div>
<div class="a" style="left:348px;top:169px;width:39px;height:1px;background:#ffffff"></div>
<div class="a" style="left:387px;top:152px;width:1px;height:18px;background:#ffffff"></div>
<div class="a" style="left:388px;top:151px;width:1px;height:19px;background:#a09c9c"></div>
<div class="a" style="left:389px;top:169px;width:65px;height:1px;background:#ffffff"></div>
<div class="a" style="left:454px;top:152px;width:1px;height:18px;background:#ffffff"></div>
<div class="a" style="left:455px;top:151px;width:1px;height:19px;background:#a09c9c"></div>
<div class="a" style="left:456px;top:169px;width:44px;height:1px;background:#ffffff"></div>
<div class="a" style="left:500px;top:152px;width:1px;height:18px;background:#ffffff"></div>
<div class="a" style="left:501px;top:151px;width:1px;height:19px;background:#a09c9c"></div>
<div class="a" style="left:502px;top:169px;width:41px;height:1px;background:#ffffff"></div>
<div class="a" style="left:543px;top:152px;width:1px;height:18px;background:#ffffff"></div>
<div class="a" style="left:544px;top:151px;width:1px;height:19px;background:#a09c9c"></div>
<div class="a" style="left:545px;top:169px;width:74px;height:1px;background:#ffffff"></div>
<div class="a" style="left:619px;top:152px;width:1px;height:18px;background:#ffffff"></div>
<div class="a" style="left:620px;top:151px;width:1px;height:19px;background:#a09c9c"></div>
<div class="a" style="left:621px;top:169px;width:190px;height:1px;background:#ffffff"></div>
<div class="a" style="left:811px;top:152px;width:1px;height:18px;background:#ffffff"></div>
<div class="a" style="left:812px;top:151px;width:1px;height:19px;background:#a09c9c"></div>
<div class="a" style="left:813px;top:169px;width:44px;height:1px;background:#ffffff"></div>
<div class="a" style="left:857px;top:152px;width:1px;height:18px;background:#ffffff"></div>
<div class="a" style="left:858px;top:151px;width:1px;height:19px;background:#a09c9c"></div>
<div class="a" style="left:859px;top:169px;width:41px;height:1px;background:#ffffff"></div>
<div class="a c" style="left:228px;top:153px">1</div>
<div class="a c" style="left:275px;top:154px">02Jan2016</div>
<div class="a c" style="left:349px;top:154px">1101</div>
<div class="a c" style="left:389px;top:154px">Invoice</div>
<div class="a c" style="left:545px;top:154px">GOLD</div>
<div class="a c" style="left:621px;top:154px">Gold Bank Emp. Pension Fund</div>
<div class="a" style="left:228px;top:170px;width:45px;height:1px;background:#ffffff"></div>
<div class="a" style="left:228px;top:188px;width:45px;height:1px;background:#a09c9c"></div>
<div class="a" style="left:274px;top:170px;width:626px;height:1px;background:#a09c9c"></div>
<div class="a" style="left:274px;top:170px;width:1px;height:19px;background:#a09c9c"></div>
<div class="a" style="left:275px;top:171px;width:71px;height:17px;background:#ddd4d4"></div>
<div class="a" style="left:275px;top:188px;width:71px;height:1px;background:#ffffff"></div>
<div class="a" style="left:346px;top:171px;width:1px;height:18px;background:#ffffff"></div>
<div class="a" style="left:347px;top:170px;width:1px;height:19px;background:#a09c9c"></div>
<div class="a" style="left:348px;top:171px;width:39px;height:17px;background:#ddd4d4"></div>
<div class="a" style="left:348px;top:188px;width:39px;height:1px;background:#ffffff"></div>
<div class="a" style="left:387px;top:171px;width:1px;height:18px;background:#ffffff"></div>
<div class="a" style="left:388px;top:170px;width:1px;height:19px;background:#a09c9c"></div>
<div class="a" style="left:389px;top:171px;width:65px;height:17px;background:#ddd4d4"></div>
<div class="a" style="left:389px;top:188px;width:65px;height:1px;background:#ffffff"></div>
<div class="a" style="left:454px;top:171px;width:1px;height:18px;background:#ffffff"></div>
<div class="a" style="left:455px;top:170px;width:1px;height:19px;background:#a09c9c"></div>
<div class="a" style="left:456px;top:171px;width:44px;height:17px;background:#ddd4d4"></div>
<div class="a" style="left:456px;top:188px;width:44px;height:1px;background:#ffffff"></div>
<div class="a" style="left:500px;top:171px;width:1px;height:18px;background:#ffffff"></div>
<div class="a" style="left:501px;top:170px;width:1px;height:19px;background:#a09c9c"></div>
<div class="a" style="left:502px;top:171px;width:41px;height:17px;background:#ddd4d4"></div>
<div class="a" style="left:502px;top:188px;width:41px;height:1px;background:#ffffff"></div>
<div class="a" style="left:543px;top:171px;width:1px;height:18px;background:#ffffff"></div>
<div class="a" style="left:544px;top:170px;width:1px;height:19px;background:#a09c9c"></div>
<div class="a" style="left:545px;top:171px;width:74px;height:17px;background:#ddd4d4"></div>
<div class="a" style="left:545px;top:188px;width:74px;height:1px;background:#ffffff"></div>
<div class="a" style="left:619px;top:171px;width:1px;height:18px;background:#ffffff"></div>
<div class="a" style="left:620px;top:170px;width:1px;height:19px;background:#a09c9c"></div>
<div class="a" style="left:621px;top:171px;width:190px;height:17px;background:#ddd4d4"></div>
<div class="a" style="left:621px;top:188px;width:190px;height:1px;background:#ffffff"></div>
<div class="a" style="left:811px;top:171px;width:1px;height:18px;background:#ffffff"></div>
<div class="a" style="left:812px;top:170px;width:1px;height:19px;background:#a09c9c"></div>
<div class="a" style="left:813px;top:171px;width:44px;height:17px;background:#ddd4d4"></div>
<div class="a" style="left:813px;top:188px;width:44px;height:1px;background:#ffffff"></div>
<div class="a" style="left:857px;top:171px;width:1px;height:18px;background:#ffffff"></div>
<div class="a" style="left:858px;top:170px;width:1px;height:19px;background:#a09c9c"></div>
<div class="a" style="left:859px;top:171px;width:41px;height:17px;background:#ddd4d4"></div>
<div class="a" style="left:859px;top:188px;width:41px;height:1px;background:#ffffff"></div>
<div class="a" style="left:389px;top:171px;width:66px;height:17px;background:#fffad4"></div>
<div class="a" style="left:388px;top:170px;width:67px;height:1px;background:#9c9a88"></div>
<div class="a" style="left:388px;top:188px;width:67px;height:1px;background:#a8a690"></div>
<div class="a c" style="left:228px;top:172px">2</div>
<div class="a c" style="left:275px;top:173px">04Jan2016</div>
<div class="a c" style="left:349px;top:173px">1102</div>
<div class="a c" style="left:389px;top:173px">Invoice</div>
<div class="a c" style="left:545px;top:173px">OLSON</div>
<div class="a c" style="left:621px;top:173px">Olson Valley Conservation Grp</div>
<div class="a" style="left:228px;top:189px;width:45px;height:1px;background:#ffffff"></div>
<div class="a" style="left:228px;top:207px;width:45px;height:1px;background:#a09c9c"></div>
<div class="a" style="left:274px;top:189px;width:626px;height:1px;background:#a09c9c"></div>
<div class="a" style="left:274px;top:189px;width:1px;height:19px;background:#a09c9c"></div>
<div class="a" style="left:275px;top:207px;width:71px;height:1px;background:#ffffff"></div>
<div class="a" style="left:346px;top:190px;width:1px;height:18px;background:#ffffff"></div>
<div class="a" style="left:347px;top:189px;width:1px;height:19px;background:#a09c9c"></div>
<div class="a" style="left:348px;top:207px;width:39px;height:1px;background:#ffffff"></div>
<div class="a" style="left:387px;top:190px;width:1px;height:18px;background:#ffffff"></div>
<div class="a" style="left:388px;top:189px;width:1px;height:19px;background:#a09c9c"></div>
<div class="a" style="left:389px;top:207px;width:65px;height:1px;background:#ffffff"></div>
<div class="a" style="left:454px;top:190px;width:1px;height:18px;background:#ffffff"></div>
<div class="a" style="left:455px;top:189px;width:1px;height:19px;background:#a09c9c"></div>
<div class="a" style="left:456px;top:207px;width:44px;height:1px;background:#ffffff"></div>
<div class="a" style="left:500px;top:190px;width:1px;height:18px;background:#ffffff"></div>
<div class="a" style="left:501px;top:189px;width:1px;height:19px;background:#a09c9c"></div>
<div class="a" style="left:502px;top:207px;width:41px;height:1px;background:#ffffff"></div>
<div class="a" style="left:543px;top:190px;width:1px;height:18px;background:#ffffff"></div>
<div class="a" style="left:544px;top:189px;width:1px;height:19px;background:#a09c9c"></div>
<div class="a" style="left:545px;top:207px;width:74px;height:1px;background:#ffffff"></div>
<div class="a" style="left:619px;top:190px;width:1px;height:18px;background:#ffffff"></div>
<div class="a" style="left:620px;top:189px;width:1px;height:19px;background:#a09c9c"></div>
<div class="a" style="left:621px;top:207px;width:190px;height:1px;background:#ffffff"></div>
<div class="a" style="left:811px;top:190px;width:1px;height:18px;background:#ffffff"></div>
<div class="a" style="left:812px;top:189px;width:1px;height:19px;background:#a09c9c"></div>
<div class="a" style="left:813px;top:207px;width:44px;height:1px;background:#ffffff"></div>
<div class="a" style="left:857px;top:190px;width:1px;height:18px;background:#ffffff"></div>
<div class="a" style="left:858px;top:189px;width:1px;height:19px;background:#a09c9c"></div>
<div class="a" style="left:859px;top:207px;width:41px;height:1px;background:#ffffff"></div>
<div class="a c" style="left:228px;top:191px">3</div>
<div class="a c" style="left:275px;top:192px">07Jan2016</div>
<div class="a c" style="left:349px;top:192px">1103</div>
<div class="a c" style="left:389px;top:192px">Invoice</div>
<div class="a c" style="left:545px;top:192px">NATIONAL</div>
<div class="a c" style="left:621px;top:192px">National Housing Co-Op Assoc.</div>
<div class="a" style="left:228px;top:208px;width:45px;height:1px;background:#ffffff"></div>
<div class="a" style="left:228px;top:226px;width:45px;height:1px;background:#a09c9c"></div>
<div class="a" style="left:274px;top:208px;width:626px;height:1px;background:#a09c9c"></div>
<div class="a" style="left:274px;top:208px;width:1px;height:19px;background:#a09c9c"></div>
<div class="a" style="left:275px;top:209px;width:71px;height:17px;background:#ffffff"></div>
<div class="a" style="left:275px;top:226px;width:71px;height:1px;background:#ffffff"></div>
<div class="a" style="left:346px;top:209px;width:1px;height:18px;background:#ffffff"></div>
<div class="a" style="left:347px;top:208px;width:1px;height:19px;background:#a09c9c"></div>
<div class="a" style="left:348px;top:209px;width:39px;height:17px;background:#ffffff"></div>
<div class="a" style="left:348px;top:226px;width:39px;height:1px;background:#ffffff"></div>
<div class="a" style="left:387px;top:209px;width:1px;height:18px;background:#ffffff"></div>
<div class="a" style="left:388px;top:208px;width:1px;height:19px;background:#a09c9c"></div>
<div class="a" style="left:389px;top:209px;width:65px;height:17px;background:#ffffff"></div>
<div class="a" style="left:389px;top:226px;width:65px;height:1px;background:#ffffff"></div>
<div class="a" style="left:454px;top:209px;width:1px;height:18px;background:#ffffff"></div>
<div class="a" style="left:455px;top:208px;width:1px;height:19px;background:#a09c9c"></div>
<div class="a" style="left:456px;top:209px;width:44px;height:17px;background:#ffffff"></div>
<div class="a" style="left:456px;top:226px;width:44px;height:1px;background:#ffffff"></div>
<div class="a" style="left:500px;top:209px;width:1px;height:18px;background:#ffffff"></div>
<div class="a" style="left:501px;top:208px;width:1px;height:19px;background:#a09c9c"></div>
<div class="a" style="left:502px;top:209px;width:41px;height:17px;background:#ffffff"></div>
<div class="a" style="left:502px;top:226px;width:41px;height:1px;background:#ffffff"></div>
<div class="a" style="left:543px;top:209px;width:1px;height:18px;background:#ffffff"></div>
<div class="a" style="left:544px;top:208px;width:1px;height:19px;background:#a09c9c"></div>
<div class="a" style="left:545px;top:209px;width:74px;height:17px;background:#ffffff"></div>
<div class="a" style="left:545px;top:226px;width:74px;height:1px;background:#ffffff"></div>
<div class="a" style="left:619px;top:209px;width:1px;height:18px;background:#ffffff"></div>
<div class="a" style="left:620px;top:208px;width:1px;height:19px;background:#a09c9c"></div>
<div class="a" style="left:621px;top:209px;width:190px;height:17px;background:#ffffff"></div>
<div class="a" style="left:621px;top:226px;width:190px;height:1px;background:#ffffff"></div>
<div class="a" style="left:811px;top:209px;width:1px;height:18px;background:#ffffff"></div>
<div class="a" style="left:812px;top:208px;width:1px;height:19px;background:#a09c9c"></div>
<div class="a" style="left:813px;top:209px;width:44px;height:17px;background:#ffffff"></div>
<div class="a" style="left:813px;top:226px;width:44px;height:1px;background:#ffffff"></div>
<div class="a" style="left:857px;top:209px;width:1px;height:18px;background:#ffffff"></div>
<div class="a" style="left:858px;top:208px;width:1px;height:19px;background:#a09c9c"></div>
<div class="a" style="left:859px;top:209px;width:41px;height:17px;background:#ffffff"></div>
<div class="a" style="left:859px;top:226px;width:41px;height:1px;background:#ffffff"></div>
<div class="a c" style="left:228px;top:210px">4</div>
<div class="a c" style="left:275px;top:211px">08Jan2016</div>
<div class="a c" style="left:349px;top:211px">1104</div>
<div class="a c" style="left:389px;top:211px">Invoice</div>
<div class="a c" style="left:672px;top:211px">s</div>
<div class="a" style="left:228px;top:227px;width:45px;height:1px;background:#ffffff"></div>
<div class="a" style="left:228px;top:245px;width:45px;height:1px;background:#a09c9c"></div>
<div class="a" style="left:274px;top:227px;width:626px;height:1px;background:#a09c9c"></div>
<div class="a" style="left:274px;top:227px;width:1px;height:19px;background:#a09c9c"></div>
<div class="a" style="left:275px;top:245px;width:71px;height:1px;background:#ffffff"></div>
<div class="a" style="left:346px;top:228px;width:1px;height:18px;background:#ffffff"></div>
<div class="a" style="left:347px;top:227px;width:1px;height:19px;background:#a09c9c"></div>
<div class="a" style="left:348px;top:245px;width:39px;height:1px;background:#ffffff"></div>
<div class="a" style="left:387px;top:228px;width:1px;height:18px;background:#ffffff"></div>
<div class="a" style="left:388px;top:227px;width:1px;height:19px;background:#a09c9c"></div>
<div class="a" style="left:389px;top:245px;width:65px;height:1px;background:#ffffff"></div>
<div class="a" style="left:454px;top:228px;width:1px;height:18px;background:#ffffff"></div>
<div class="a" style="left:455px;top:227px;width:1px;height:19px;background:#a09c9c"></div>
<div class="a" style="left:456px;top:245px;width:44px;height:1px;background:#ffffff"></div>
<div class="a" style="left:500px;top:228px;width:1px;height:18px;background:#ffffff"></div>
<div class="a" style="left:501px;top:227px;width:1px;height:19px;background:#a09c9c"></div>
<div class="a" style="left:502px;top:245px;width:41px;height:1px;background:#ffffff"></div>
<div class="a" style="left:543px;top:228px;width:1px;height:18px;background:#ffffff"></div>
<div class="a" style="left:544px;top:227px;width:1px;height:19px;background:#a09c9c"></div>
<div class="a" style="left:545px;top:245px;width:74px;height:1px;background:#ffffff"></div>
<div class="a" style="left:619px;top:228px;width:1px;height:18px;background:#ffffff"></div>
<div class="a" style="left:620px;top:227px;width:1px;height:19px;background:#a09c9c"></div>
<div class="a" style="left:621px;top:245px;width:190px;height:1px;background:#ffffff"></div>
<div class="a" style="left:811px;top:228px;width:1px;height:18px;background:#ffffff"></div>
<div class="a" style="left:812px;top:227px;width:1px;height:19px;background:#a09c9c"></div>
<div class="a" style="left:813px;top:245px;width:44px;height:1px;background:#ffffff"></div>
<div class="a" style="left:857px;top:228px;width:1px;height:18px;background:#ffffff"></div>
<div class="a" style="left:858px;top:227px;width:1px;height:19px;background:#a09c9c"></div>
<div class="a" style="left:859px;top:245px;width:41px;height:1px;background:#ffffff"></div>
<div class="a c" style="left:228px;top:229px">5</div>
<div class="a c" style="left:275px;top:230px">14Jan2016</div>
<div class="a c" style="left:349px;top:230px">1105</div>
<div class="a c" style="left:389px;top:230px">Invoice</div>
<div class="a c" style="left:674px;top:230px">Accounting Services</div>
<div class="a" style="left:228px;top:246px;width:45px;height:1px;background:#ffffff"></div>
<div class="a" style="left:228px;top:264px;width:45px;height:1px;background:#a09c9c"></div>
<div class="a" style="left:274px;top:246px;width:626px;height:1px;background:#a09c9c"></div>
<div class="a" style="left:274px;top:246px;width:1px;height:19px;background:#a09c9c"></div>
<div class="a" style="left:275px;top:247px;width:71px;height:17px;background:#ffffff"></div>
<div class="a" style="left:275px;top:264px;width:71px;height:1px;background:#ffffff"></div>
<div class="a" style="left:346px;top:247px;width:1px;height:18px;background:#ffffff"></div>
<div class="a" style="left:347px;top:246px;width:1px;height:19px;background:#a09c9c"></div>
<div class="a" style="left:348px;top:247px;width:39px;height:17px;background:#ffffff"></div>
<div class="a" style="left:348px;top:264px;width:39px;height:1px;background:#ffffff"></div>
<div class="a" style="left:387px;top:247px;width:1px;height:18px;background:#ffffff"></div>
<div class="a" style="left:388px;top:246px;width:1px;height:19px;background:#a09c9c"></div>
<div class="a" style="left:389px;top:247px;width:65px;height:17px;background:#ffffff"></div>
<div class="a" style="left:389px;top:264px;width:65px;height:1px;background:#ffffff"></div>
<div class="a" style="left:454px;top:247px;width:1px;height:18px;background:#ffffff"></div>
<div class="a" style="left:455px;top:246px;width:1px;height:19px;background:#a09c9c"></div>
<div class="a" style="left:456px;top:247px;width:44px;height:17px;background:#ffffff"></div>
<div class="a" style="left:456px;top:264px;width:44px;height:1px;background:#ffffff"></div>
<div class="a" style="left:500px;top:247px;width:1px;height:18px;background:#ffffff"></div>
<div class="a" style="left:501px;top:246px;width:1px;height:19px;background:#a09c9c"></div>
<div class="a" style="left:502px;top:247px;width:41px;height:17px;background:#ffffff"></div>
<div class="a" style="left:502px;top:264px;width:41px;height:1px;background:#ffffff"></div>
<div class="a" style="left:543px;top:247px;width:1px;height:18px;background:#ffffff"></div>
<div class="a" style="left:544px;top:246px;width:1px;height:19px;background:#a09c9c"></div>
<div class="a" style="left:545px;top:247px;width:74px;height:17px;background:#ffffff"></div>
<div class="a" style="left:545px;top:264px;width:74px;height:1px;background:#ffffff"></div>
<div class="a" style="left:619px;top:247px;width:1px;height:18px;background:#ffffff"></div>
<div class="a" style="left:620px;top:246px;width:1px;height:19px;background:#a09c9c"></div>
<div class="a" style="left:621px;top:247px;width:190px;height:17px;background:#ffffff"></div>
<div class="a" style="left:621px;top:264px;width:190px;height:1px;background:#ffffff"></div>
<div class="a" style="left:811px;top:247px;width:1px;height:18px;background:#ffffff"></div>
<div class="a" style="left:812px;top:246px;width:1px;height:19px;background:#a09c9c"></div>
<div class="a" style="left:813px;top:247px;width:44px;height:17px;background:#ffffff"></div>
<div class="a" style="left:813px;top:264px;width:44px;height:1px;background:#ffffff"></div>
<div class="a" style="left:857px;top:247px;width:1px;height:18px;background:#ffffff"></div>
<div class="a" style="left:858px;top:246px;width:1px;height:19px;background:#a09c9c"></div>
<div class="a" style="left:859px;top:247px;width:41px;height:17px;background:#ffffff"></div>
<div class="a" style="left:859px;top:264px;width:41px;height:1px;background:#ffffff"></div>
<div class="a c" style="left:228px;top:248px">6</div>
<div class="a c" style="left:275px;top:249px">15Jan2016</div>
<div class="a c" style="left:349px;top:249px">1106</div>
<div class="a c" style="left:389px;top:249px">Invoice</div>
<div class="a c" style="left:670px;top:249px">Housing Co-Op Assoc.</div>
<div class="a" style="left:228px;top:265px;width:45px;height:1px;background:#ffffff"></div>
<div class="a" style="left:228px;top:283px;width:45px;height:1px;background:#a09c9c"></div>
<div class="a" style="left:274px;top:265px;width:626px;height:1px;background:#a09c9c"></div>
<div class="a" style="left:274px;top:265px;width:1px;height:19px;background:#a09c9c"></div>
<div class="a" style="left:275px;top:283px;width:71px;height:1px;background:#ffffff"></div>
<div class="a" style="left:346px;top:266px;width:1px;height:18px;background:#ffffff"></div>
<div class="a" style="left:347px;top:265px;width:1px;height:19px;background:#a09c9c"></div>
<div class="a" style="left:348px;top:283px;width:39px;height:1px;background:#ffffff"></div>
<div class="a" style="left:387px;top:266px;width:1px;height:18px;background:#ffffff"></div>
<div class="a" style="left:388px;top:265px;width:1px;height:19px;background:#a09c9c"></div>
<div class="a" style="left:389px;top:283px;width:65px;height:1px;background:#ffffff"></div>
<div class="a" style="left:454px;top:266px;width:1px;height:18px;background:#ffffff"></div>
<div class="a" style="left:455px;top:265px;width:1px;height:19px;background:#a09c9c"></div>
<div class="a" style="left:456px;top:283px;width:44px;height:1px;background:#ffffff"></div>
<div class="a" style="left:500px;top:266px;width:1px;height:18px;background:#ffffff"></div>
<div class="a" style="left:501px;top:265px;width:1px;height:19px;background:#a09c9c"></div>
<div class="a" style="left:502px;top:283px;width:41px;height:1px;background:#ffffff"></div>
<div class="a" style="left:543px;top:266px;width:1px;height:18px;background:#ffffff"></div>
<div class="a" style="left:544px;top:265px;width:1px;height:19px;background:#a09c9c"></div>
<div class="a" style="left:545px;top:283px;width:74px;height:1px;background:#ffffff"></div>
<div class="a" style="left:619px;top:266px;width:1px;height:18px;background:#ffffff"></div>
<div class="a" style="left:620px;top:265px;width:1px;height:19px;background:#a09c9c"></div>
<div class="a" style="left:621px;top:283px;width:190px;height:1px;background:#ffffff"></div>
<div class="a" style="left:811px;top:266px;width:1px;height:18px;background:#ffffff"></div>
<div class="a" style="left:812px;top:265px;width:1px;height:19px;background:#a09c9c"></div>
<div class="a" style="left:813px;top:283px;width:44px;height:1px;background:#ffffff"></div>
<div class="a" style="left:857px;top:266px;width:1px;height:18px;background:#ffffff"></div>
<div class="a" style="left:858px;top:265px;width:1px;height:19px;background:#a09c9c"></div>
<div class="a" style="left:859px;top:283px;width:41px;height:1px;background:#ffffff"></div>
<div class="a c" style="left:228px;top:267px">7</div>
<div class="a c" style="left:275px;top:268px">17Jan2016</div>
<div class="a c" style="left:349px;top:268px">1107</div>
<div class="a c" style="left:389px;top:268px">Invoice</div>
<div class="a c" style="left:660px;top:268px">Computer Consultants</div>
<div class="a c" style="left:859px;top:268px">S_NORTH</div>
<div class="a" style="left:228px;top:284px;width:45px;height:1px;background:#ffffff"></div>
<div class="a" style="left:228px;top:302px;width:45px;height:1px;background:#a09c9c"></div>
<div class="a" style="left:274px;top:284px;width:626px;height:1px;background:#a09c9c"></div>
<div class="a" style="left:274px;top:284px;width:1px;height:19px;background:#a09c9c"></div>
<div class="a" style="left:275px;top:285px;width:71px;height:17px;background:#ffffff"></div>
<div class="a" style="left:275px;top:302px;width:71px;height:1px;background:#ffffff"></div>
<div class="a" style="left:346px;top:285px;width:1px;height:18px;background:#ffffff"></div>
<div class="a" style="left:347px;top:284px;width:1px;height:19px;background:#a09c9c"></div>
<div class="a" style="left:348px;top:285px;width:39px;height:17px;background:#ffffff"></div>
<div class="a" style="left:348px;top:302px;width:39px;height:1px;background:#ffffff"></div>
<div class="a" style="left:387px;top:285px;width:1px;height:18px;background:#ffffff"></div>
<div class="a" style="left:388px;top:284px;width:1px;height:19px;background:#a09c9c"></div>
<div class="a" style="left:389px;top:285px;width:65px;height:17px;background:#ffffff"></div>
<div class="a" style="left:389px;top:302px;width:65px;height:1px;background:#ffffff"></div>
<div class="a" style="left:454px;top:285px;width:1px;height:18px;background:#ffffff"></div>
<div class="a" style="left:455px;top:284px;width:1px;height:19px;background:#a09c9c"></div>
<div class="a" style="left:456px;top:285px;width:44px;height:17px;background:#ffffff"></div>
<div class="a" style="left:456px;top:302px;width:44px;height:1px;background:#ffffff"></div>
<div class="a" style="left:500px;top:285px;width:1px;height:18px;background:#ffffff"></div>
<div class="a" style="left:501px;top:284px;width:1px;height:19px;background:#a09c9c"></div>
<div class="a" style="left:502px;top:285px;width:41px;height:17px;background:#ffffff"></div>
<div class="a" style="left:502px;top:302px;width:41px;height:1px;background:#ffffff"></div>
<div class="a" style="left:543px;top:285px;width:1px;height:18px;background:#ffffff"></div>
<div class="a" style="left:544px;top:284px;width:1px;height:19px;background:#a09c9c"></div>
<div class="a" style="left:545px;top:285px;width:74px;height:17px;background:#ffffff"></div>
<div class="a" style="left:545px;top:302px;width:74px;height:1px;background:#ffffff"></div>
<div class="a" style="left:619px;top:285px;width:1px;height:18px;background:#ffffff"></div>
<div class="a" style="left:620px;top:284px;width:1px;height:19px;background:#a09c9c"></div>
<div class="a" style="left:621px;top:285px;width:190px;height:17px;background:#ffffff"></div>
<div class="a" style="left:621px;top:302px;width:190px;height:1px;background:#ffffff"></div>
<div class="a" style="left:811px;top:285px;width:1px;height:18px;background:#ffffff"></div>
<div class="a" style="left:812px;top:284px;width:1px;height:19px;background:#a09c9c"></div>
<div class="a" style="left:813px;top:285px;width:44px;height:17px;background:#ffffff"></div>
<div class="a" style="left:813px;top:302px;width:44px;height:1px;background:#ffffff"></div>
<div class="a" style="left:857px;top:285px;width:1px;height:18px;background:#ffffff"></div>
<div class="a" style="left:858px;top:284px;width:1px;height:19px;background:#a09c9c"></div>
<div class="a" style="left:859px;top:285px;width:41px;height:17px;background:#ffffff"></div>
<div class="a" style="left:859px;top:302px;width:41px;height:1px;background:#ffffff"></div>
<div class="a c" style="left:228px;top:286px">8</div>
<div class="a c" style="left:275px;top:287px">18Jan2016</div>
<div class="a c" style="left:349px;top:287px">1108</div>
<div class="a c" style="left:389px;top:287px">Invoice</div>
<div class="a c" style="left:669px;top:287px">Retirement Homes</div>
<div class="a" style="left:228px;top:303px;width:45px;height:1px;background:#ffffff"></div>
<div class="a" style="left:228px;top:321px;width:45px;height:1px;background:#a09c9c"></div>
<div class="a" style="left:274px;top:303px;width:626px;height:1px;background:#a09c9c"></div>
<div class="a" style="left:274px;top:303px;width:1px;height:19px;background:#a09c9c"></div>
<div class="a" style="left:275px;top:321px;width:71px;height:1px;background:#ffffff"></div>
<div class="a" style="left:346px;top:304px;width:1px;height:18px;background:#ffffff"></div>
<div class="a" style="left:347px;top:303px;width:1px;height:19px;background:#a09c9c"></div>
<div class="a" style="left:348px;top:321px;width:39px;height:1px;background:#ffffff"></div>
<div class="a" style="left:387px;top:304px;width:1px;height:18px;background:#ffffff"></div>
<div class="a" style="left:388px;top:303px;width:1px;height:19px;background:#a09c9c"></div>
<div class="a" style="left:389px;top:321px;width:65px;height:1px;background:#ffffff"></div>
<div class="a" style="left:454px;top:304px;width:1px;height:18px;background:#ffffff"></div>
<div class="a" style="left:455px;top:303px;width:1px;height:19px;background:#a09c9c"></div>
<div class="a" style="left:456px;top:321px;width:44px;height:1px;background:#ffffff"></div>
<div class="a" style="left:500px;top:304px;width:1px;height:18px;background:#ffffff"></div>
<div class="a" style="left:501px;top:303px;width:1px;height:19px;background:#a09c9c"></div>
<div class="a" style="left:502px;top:321px;width:41px;height:1px;background:#ffffff"></div>
<div class="a" style="left:543px;top:304px;width:1px;height:18px;background:#ffffff"></div>
<div class="a" style="left:544px;top:303px;width:1px;height:19px;background:#a09c9c"></div>
<div class="a" style="left:545px;top:321px;width:74px;height:1px;background:#ffffff"></div>
<div class="a" style="left:619px;top:304px;width:1px;height:18px;background:#ffffff"></div>
<div class="a" style="left:620px;top:303px;width:1px;height:19px;background:#a09c9c"></div>
<div class="a" style="left:621px;top:321px;width:190px;height:1px;background:#ffffff"></div>
<div class="a" style="left:811px;top:304px;width:1px;height:18px;background:#ffffff"></div>
<div class="a" style="left:812px;top:303px;width:1px;height:19px;background:#a09c9c"></div>
<div class="a" style="left:813px;top:321px;width:44px;height:1px;background:#ffffff"></div>
<div class="a" style="left:857px;top:304px;width:1px;height:18px;background:#ffffff"></div>
<div class="a" style="left:858px;top:303px;width:1px;height:19px;background:#a09c9c"></div>
<div class="a" style="left:859px;top:321px;width:41px;height:1px;background:#ffffff"></div>
<div class="a c" style="left:228px;top:305px">9</div>
<div class="a c" style="left:275px;top:306px">19Jan2016</div>
<div class="a c" style="left:349px;top:306px">1109</div>
<div class="a c" style="left:389px;top:306px">Invoice</div>
<div class="a c" style="left:674px;top:306px">Accounting Services</div>
<div class="a" style="left:228px;top:322px;width:45px;height:1px;background:#ffffff"></div>
<div class="a" style="left:228px;top:340px;width:45px;height:1px;background:#a09c9c"></div>
<div class="a" style="left:274px;top:322px;width:626px;height:1px;background:#a09c9c"></div>
<div class="a" style="left:274px;top:322px;width:1px;height:19px;background:#a09c9c"></div>
<div class="a" style="left:275px;top:323px;width:71px;height:17px;background:#ffffff"></div>
<div class="a" style="left:275px;top:340px;width:71px;height:1px;background:#ffffff"></div>
<div class="a" style="left:346px;top:323px;width:1px;height:18px;background:#ffffff"></div>
<div class="a" style="left:347px;top:322px;width:1px;height:19px;background:#a09c9c"></div>
<div class="a" style="left:348px;top:323px;width:39px;height:17px;background:#ffffff"></div>
<div class="a" style="left:348px;top:340px;width:39px;height:1px;background:#ffffff"></div>
<div class="a" style="left:387px;top:323px;width:1px;height:18px;background:#ffffff"></div>
<div class="a" style="left:388px;top:322px;width:1px;height:19px;background:#a09c9c"></div>
<div class="a" style="left:389px;top:323px;width:65px;height:17px;background:#ffffff"></div>
<div class="a" style="left:389px;top:340px;width:65px;height:1px;background:#ffffff"></div>
<div class="a" style="left:454px;top:323px;width:1px;height:18px;background:#ffffff"></div>
<div class="a" style="left:455px;top:322px;width:1px;height:19px;background:#a09c9c"></div>
<div class="a" style="left:456px;top:323px;width:44px;height:17px;background:#ffffff"></div>
<div class="a" style="left:456px;top:340px;width:44px;height:1px;background:#ffffff"></div>
<div class="a" style="left:500px;top:323px;width:1px;height:18px;background:#ffffff"></div>
<div class="a" style="left:501px;top:322px;width:1px;height:19px;background:#a09c9c"></div>
<div class="a" style="left:502px;top:323px;width:41px;height:17px;background:#ffffff"></div>
<div class="a" style="left:502px;top:340px;width:41px;height:1px;background:#ffffff"></div>
<div class="a" style="left:543px;top:323px;width:1px;height:18px;background:#ffffff"></div>
<div class="a" style="left:544px;top:322px;width:1px;height:19px;background:#a09c9c"></div>
<div class="a" style="left:545px;top:323px;width:74px;height:17px;background:#ffffff"></div>
<div class="a" style="left:545px;top:340px;width:74px;height:1px;background:#ffffff"></div>
<div class="a" style="left:619px;top:323px;width:1px;height:18px;background:#ffffff"></div>
<div class="a" style="left:620px;top:322px;width:1px;height:19px;background:#a09c9c"></div>
<div class="a" style="left:621px;top:323px;width:190px;height:17px;background:#ffffff"></div>
<div class="a" style="left:621px;top:340px;width:190px;height:1px;background:#ffffff"></div>
<div class="a" style="left:811px;top:323px;width:1px;height:18px;background:#ffffff"></div>
<div class="a" style="left:812px;top:322px;width:1px;height:19px;background:#a09c9c"></div>
<div class="a" style="left:813px;top:323px;width:44px;height:17px;background:#ffffff"></div>
<div class="a" style="left:813px;top:340px;width:44px;height:1px;background:#ffffff"></div>
<div class="a" style="left:857px;top:323px;width:1px;height:18px;background:#ffffff"></div>
<div class="a" style="left:858px;top:322px;width:1px;height:19px;background:#a09c9c"></div>
<div class="a" style="left:859px;top:323px;width:41px;height:17px;background:#ffffff"></div>
<div class="a" style="left:859px;top:340px;width:41px;height:1px;background:#ffffff"></div>
<div class="a c" style="left:228px;top:324px">10</div>
<div class="a c" style="left:275px;top:325px">23Jan2016</div>
<div class="a c" style="left:349px;top:325px">1110</div>
<div class="a c" style="left:389px;top:325px">Invoice</div>
<div class="a c" style="left:669px;top:325px">Corporation</div>
<div class="a" style="left:228px;top:341px;width:45px;height:1px;background:#ffffff"></div>
<div class="a" style="left:228px;top:359px;width:45px;height:1px;background:#a09c9c"></div>
<div class="a" style="left:274px;top:341px;width:626px;height:1px;background:#a09c9c"></div>
<div class="a" style="left:274px;top:341px;width:1px;height:19px;background:#a09c9c"></div>
<div class="a" style="left:275px;top:359px;width:71px;height:1px;background:#ffffff"></div>
<div class="a" style="left:346px;top:342px;width:1px;height:18px;background:#ffffff"></div>
<div class="a" style="left:347px;top:341px;width:1px;height:19px;background:#a09c9c"></div>
<div class="a" style="left:348px;top:359px;width:39px;height:1px;background:#ffffff"></div>
<div class="a" style="left:387px;top:342px;width:1px;height:18px;background:#ffffff"></div>
<div class="a" style="left:388px;top:341px;width:1px;height:19px;background:#a09c9c"></div>
<div class="a" style="left:389px;top:359px;width:65px;height:1px;background:#ffffff"></div>
<div class="a" style="left:454px;top:342px;width:1px;height:18px;background:#ffffff"></div>
<div class="a" style="left:455px;top:341px;width:1px;height:19px;background:#a09c9c"></div>
<div class="a" style="left:456px;top:359px;width:44px;height:1px;background:#ffffff"></div>
<div class="a" style="left:500px;top:342px;width:1px;height:18px;background:#ffffff"></div>
<div class="a" style="left:501px;top:341px;width:1px;height:19px;background:#a09c9c"></div>
<div class="a" style="left:502px;top:359px;width:41px;height:1px;background:#ffffff"></div>
<div class="a" style="left:543px;top:342px;width:1px;height:18px;background:#ffffff"></div>
<div class="a" style="left:544px;top:341px;width:1px;height:19px;background:#a09c9c"></div>
<div class="a" style="left:545px;top:359px;width:74px;height:1px;background:#ffffff"></div>
<div class="a" style="left:619px;top:342px;width:1px;height:18px;background:#ffffff"></div>
<div class="a" style="left:620px;top:341px;width:1px;height:19px;background:#a09c9c"></div>
<div class="a" style="left:621px;top:359px;width:190px;height:1px;background:#ffffff"></div>
<div class="a" style="left:811px;top:342px;width:1px;height:18px;background:#ffffff"></div>
<div class="a" style="left:812px;top:341px;width:1px;height:19px;background:#a09c9c"></div>
<div class="a" style="left:813px;top:359px;width:44px;height:1px;background:#ffffff"></div>
<div class="a" style="left:857px;top:342px;width:1px;height:18px;background:#ffffff"></div>
<div class="a" style="left:858px;top:341px;width:1px;height:19px;background:#a09c9c"></div>
<div class="a" style="left:859px;top:359px;width:41px;height:1px;background:#ffffff"></div>
<div class="a c" style="left:228px;top:343px">11</div>
<div class="a c" style="left:275px;top:344px">23Jan2016</div>
<div class="a c" style="left:349px;top:344px">1111</div>
<div class="a c" style="left:389px;top:344px">Invoice</div>
<div class="a c" style="left:675px;top:344px">Waste Management</div>
<div class="a" style="left:228px;top:360px;width:45px;height:1px;background:#ffffff"></div>
<div class="a" style="left:228px;top:378px;width:45px;height:1px;background:#a09c9c"></div>
<div class="a" style="left:274px;top:360px;width:626px;height:1px;background:#a09c9c"></div>
<div class="a" style="left:274px;top:360px;width:1px;height:19px;background:#a09c9c"></div>
<div class="a" style="left:275px;top:361px;width:71px;height:17px;background:#ffffff"></div>
<div class="a" style="left:275px;top:378px;width:71px;height:1px;background:#ffffff"></div>
<div class="a" style="left:346px;top:361px;width:1px;height:18px;background:#ffffff"></div>
<div class="a" style="left:347px;top:360px;width:1px;height:19px;background:#a09c9c"></div>
<div class="a" style="left:348px;top:361px;width:39px;height:17px;background:#ffffff"></div>
<div class="a" style="left:348px;top:378px;width:39px;height:1px;background:#ffffff"></div>
<div class="a" style="left:387px;top:361px;width:1px;height:18px;background:#ffffff"></div>
<div class="a" style="left:388px;top:360px;width:1px;height:19px;background:#a09c9c"></div>
<div class="a" style="left:389px;top:361px;width:65px;height:17px;background:#ffffff"></div>
<div class="a" style="left:389px;top:378px;width:65px;height:1px;background:#ffffff"></div>
<div class="a" style="left:454px;top:361px;width:1px;height:18px;background:#ffffff"></div>
<div class="a" style="left:455px;top:360px;width:1px;height:19px;background:#a09c9c"></div>
<div class="a" style="left:456px;top:361px;width:44px;height:17px;background:#ffffff"></div>
<div class="a" style="left:456px;top:378px;width:44px;height:1px;background:#ffffff"></div>
<div class="a" style="left:500px;top:361px;width:1px;height:18px;background:#ffffff"></div>
<div class="a" style="left:501px;top:360px;width:1px;height:19px;background:#a09c9c"></div>
<div class="a" style="left:502px;top:361px;width:41px;height:17px;background:#ffffff"></div>
<div class="a" style="left:502px;top:378px;width:41px;height:1px;background:#ffffff"></div>
<div class="a" style="left:543px;top:361px;width:1px;height:18px;background:#ffffff"></div>
<div class="a" style="left:544px;top:360px;width:1px;height:19px;background:#a09c9c"></div>
<div class="a" style="left:545px;top:361px;width:74px;height:17px;background:#ffffff"></div>
<div class="a" style="left:545px;top:378px;width:74px;height:1px;background:#ffffff"></div>
<div class="a" style="left:619px;top:361px;width:1px;height:18px;background:#ffffff"></div>
<div class="a" style="left:620px;top:360px;width:1px;height:19px;background:#a09c9c"></div>
<div class="a" style="left:621px;top:361px;width:190px;height:17px;background:#ffffff"></div>
<div class="a" style="left:621px;top:378px;width:190px;height:1px;background:#ffffff"></div>
<div class="a" style="left:811px;top:361px;width:1px;height:18px;background:#ffffff"></div>
<div class="a" style="left:812px;top:360px;width:1px;height:19px;background:#a09c9c"></div>
<div class="a" style="left:813px;top:361px;width:44px;height:17px;background:#ffffff"></div>
<div class="a" style="left:813px;top:378px;width:44px;height:1px;background:#ffffff"></div>
<div class="a" style="left:857px;top:361px;width:1px;height:18px;background:#ffffff"></div>
<div class="a" style="left:858px;top:360px;width:1px;height:19px;background:#a09c9c"></div>
<div class="a" style="left:859px;top:361px;width:41px;height:17px;background:#ffffff"></div>
<div class="a" style="left:859px;top:378px;width:41px;height:1px;background:#ffffff"></div>
<div class="a c" style="left:228px;top:362px">12</div>
<div class="a c" style="left:275px;top:363px">25Jan2016</div>
<div class="a c" style="left:349px;top:363px">1112</div>
<div class="a c" style="left:389px;top:363px">Invoice</div>
<div class="a c" style="left:669.5px;top:363px">any's Bookkeeping Serv.</div>
<div class="a" style="left:228px;top:379px;width:45px;height:1px;background:#ffffff"></div>
<div class="a" style="left:228px;top:397px;width:45px;height:1px;background:#a09c9c"></div>
<div class="a" style="left:274px;top:379px;width:626px;height:1px;background:#a09c9c"></div>
<div class="a" style="left:274px;top:379px;width:1px;height:19px;background:#a09c9c"></div>
<div class="a" style="left:275px;top:397px;width:71px;height:1px;background:#ffffff"></div>
<div class="a" style="left:346px;top:380px;width:1px;height:18px;background:#ffffff"></div>
<div class="a" style="left:347px;top:379px;width:1px;height:19px;background:#a09c9c"></div>
<div class="a" style="left:348px;top:397px;width:39px;height:1px;background:#ffffff"></div>
<div class="a" style="left:387px;top:380px;width:1px;height:18px;background:#ffffff"></div>
<div class="a" style="left:388px;top:379px;width:1px;height:19px;background:#a09c9c"></div>
<div class="a" style="left:389px;top:397px;width:65px;height:1px;background:#ffffff"></div>
<div class="a" style="left:454px;top:380px;width:1px;height:18px;background:#ffffff"></div>
<div class="a" style="left:455px;top:379px;width:1px;height:19px;background:#a09c9c"></div>
<div class="a" style="left:456px;top:397px;width:44px;height:1px;background:#ffffff"></div>
<div class="a" style="left:500px;top:380px;width:1px;height:18px;background:#ffffff"></div>
<div class="a" style="left:501px;top:379px;width:1px;height:19px;background:#a09c9c"></div>
<div class="a" style="left:502px;top:397px;width:41px;height:1px;background:#ffffff"></div>
<div class="a" style="left:543px;top:380px;width:1px;height:18px;background:#ffffff"></div>
<div class="a" style="left:544px;top:379px;width:1px;height:19px;background:#a09c9c"></div>
<div class="a" style="left:545px;top:397px;width:74px;height:1px;background:#ffffff"></div>
<div class="a" style="left:619px;top:380px;width:1px;height:18px;background:#ffffff"></div>
<div class="a" style="left:620px;top:379px;width:1px;height:19px;background:#a09c9c"></div>
<div class="a" style="left:621px;top:397px;width:190px;height:1px;background:#ffffff"></div>
<div class="a" style="left:811px;top:380px;width:1px;height:18px;background:#ffffff"></div>
<div class="a" style="left:812px;top:379px;width:1px;height:19px;background:#a09c9c"></div>
<div class="a" style="left:813px;top:397px;width:44px;height:1px;background:#ffffff"></div>
<div class="a" style="left:857px;top:380px;width:1px;height:18px;background:#ffffff"></div>
<div class="a" style="left:858px;top:379px;width:1px;height:19px;background:#a09c9c"></div>
<div class="a" style="left:859px;top:397px;width:41px;height:1px;background:#ffffff"></div>
<div class="a c" style="left:228px;top:381px">13</div>
<div class="a c" style="left:275px;top:382px">26Jan2016</div>
<div class="a c" style="left:349px;top:382px">1113</div>
<div class="a c" style="left:389px;top:382px">Invoice</div>
<div class="a c" style="left:660px;top:382px">Computer Consultants</div>
<div class="a" style="left:228px;top:398px;width:45px;height:1px;background:#ffffff"></div>
<div class="a" style="left:228px;top:416px;width:45px;height:1px;background:#a09c9c"></div>
<div class="a" style="left:274px;top:398px;width:626px;height:1px;background:#a09c9c"></div>
<div class="a" style="left:274px;top:398px;width:1px;height:19px;background:#a09c9c"></div>
<div class="a" style="left:275px;top:399px;width:71px;height:17px;background:#ffffff"></div>
<div class="a" style="left:275px;top:416px;width:71px;height:1px;background:#ffffff"></div>
<div class="a" style="left:346px;top:399px;width:1px;height:18px;background:#ffffff"></div>
<div class="a" style="left:347px;top:398px;width:1px;height:19px;background:#a09c9c"></div>
<div class="a" style="left:348px;top:399px;width:39px;height:17px;background:#ffffff"></div>
<div class="a" style="left:348px;top:416px;width:39px;height:1px;background:#ffffff"></div>
<div class="a" style="left:387px;top:399px;width:1px;height:18px;background:#ffffff"></div>
<div class="a" style="left:388px;top:398px;width:1px;height:19px;background:#a09c9c"></div>
<div class="a" style="left:389px;top:399px;width:65px;height:17px;background:#ffffff"></div>
<div class="a" style="left:389px;top:416px;width:65px;height:1px;background:#ffffff"></div>
<div class="a" style="left:454px;top:399px;width:1px;height:18px;background:#ffffff"></div>
<div class="a" style="left:455px;top:398px;width:1px;height:19px;background:#a09c9c"></div>
<div class="a" style="left:456px;top:399px;width:44px;height:17px;background:#ffffff"></div>
<div class="a" style="left:456px;top:416px;width:44px;height:1px;background:#ffffff"></div>
<div class="a" style="left:500px;top:399px;width:1px;height:18px;background:#ffffff"></div>
<div class="a" style="left:501px;top:398px;width:1px;height:19px;background:#a09c9c"></div>
<div class="a" style="left:502px;top:399px;width:41px;height:17px;background:#ffffff"></div>
<div class="a" style="left:502px;top:416px;width:41px;height:1px;background:#ffffff"></div>
<div class="a" style="left:543px;top:399px;width:1px;height:18px;background:#ffffff"></div>
<div class="a" style="left:544px;top:398px;width:1px;height:19px;background:#a09c9c"></div>
<div class="a" style="left:545px;top:399px;width:74px;height:17px;background:#ffffff"></div>
<div class="a" style="left:545px;top:416px;width:74px;height:1px;background:#ffffff"></div>
<div class="a" style="left:619px;top:399px;width:1px;height:18px;background:#ffffff"></div>
<div class="a" style="left:620px;top:398px;width:1px;height:19px;background:#a09c9c"></div>
<div class="a" style="left:621px;top:399px;width:190px;height:17px;background:#ffffff"></div>
<div class="a" style="left:621px;top:416px;width:190px;height:1px;background:#ffffff"></div>
<div class="a" style="left:811px;top:399px;width:1px;height:18px;background:#ffffff"></div>
<div class="a" style="left:812px;top:398px;width:1px;height:19px;background:#a09c9c"></div>
<div class="a" style="left:813px;top:399px;width:44px;height:17px;background:#ffffff"></div>
<div class="a" style="left:813px;top:416px;width:44px;height:1px;background:#ffffff"></div>
<div class="a" style="left:857px;top:399px;width:1px;height:18px;background:#ffffff"></div>
<div class="a" style="left:858px;top:398px;width:1px;height:19px;background:#a09c9c"></div>
<div class="a" style="left:859px;top:399px;width:41px;height:17px;background:#ffffff"></div>
<div class="a" style="left:859px;top:416px;width:41px;height:1px;background:#ffffff"></div>
<div class="a c" style="left:228px;top:400px">14</div>
<div class="a c" style="left:275px;top:401px">26Jan2016</div>
<div class="a c" style="left:349px;top:401px">1114</div>
<div class="a c" style="left:389px;top:401px">Invoice</div>
<div class="a c" style="left:660px;top:401px">Electronics</div>
<div class="a" style="left:228px;top:417px;width:45px;height:1px;background:#ffffff"></div>
<div class="a" style="left:228px;top:435px;width:45px;height:1px;background:#a09c9c"></div>
<div class="a" style="left:274px;top:417px;width:626px;height:1px;background:#a09c9c"></div>
<div class="a" style="left:274px;top:417px;width:1px;height:19px;background:#a09c9c"></div>
<div class="a" style="left:275px;top:435px;width:71px;height:1px;background:#ffffff"></div>
<div class="a" style="left:346px;top:418px;width:1px;height:18px;background:#ffffff"></div>
<div class="a" style="left:347px;top:417px;width:1px;height:19px;background:#a09c9c"></div>
<div class="a" style="left:348px;top:435px;width:39px;height:1px;background:#ffffff"></div>
<div class="a" style="left:387px;top:418px;width:1px;height:18px;background:#ffffff"></div>
<div class="a" style="left:388px;top:417px;width:1px;height:19px;background:#a09c9c"></div>
<div class="a" style="left:389px;top:435px;width:65px;height:1px;background:#ffffff"></div>
<div class="a" style="left:454px;top:418px;width:1px;height:18px;background:#ffffff"></div>
<div class="a" style="left:455px;top:417px;width:1px;height:19px;background:#a09c9c"></div>
<div class="a" style="left:456px;top:435px;width:44px;height:1px;background:#ffffff"></div>
<div class="a" style="left:500px;top:418px;width:1px;height:18px;background:#ffffff"></div>
<div class="a" style="left:501px;top:417px;width:1px;height:19px;background:#a09c9c"></div>
<div class="a" style="left:502px;top:435px;width:41px;height:1px;background:#ffffff"></div>
<div class="a" style="left:543px;top:418px;width:1px;height:18px;background:#ffffff"></div>
<div class="a" style="left:544px;top:417px;width:1px;height:19px;background:#a09c9c"></div>
<div class="a" style="left:545px;top:435px;width:74px;height:1px;background:#ffffff"></div>
<div class="a" style="left:619px;top:418px;width:1px;height:18px;background:#ffffff"></div>
<div class="a" style="left:620px;top:417px;width:1px;height:19px;background:#a09c9c"></div>
<div class="a" style="left:621px;top:435px;width:190px;height:1px;background:#ffffff"></div>
<div class="a" style="left:811px;top:418px;width:1px;height:18px;background:#ffffff"></div>
<div class="a" style="left:812px;top:417px;width:1px;height:19px;background:#a09c9c"></div>
<div class="a" style="left:813px;top:435px;width:44px;height:1px;background:#ffffff"></div>
<div class="a" style="left:857px;top:418px;width:1px;height:18px;background:#ffffff"></div>
<div class="a" style="left:858px;top:417px;width:1px;height:19px;background:#a09c9c"></div>
<div class="a" style="left:859px;top:435px;width:41px;height:1px;background:#ffffff"></div>
<div class="a c" style="left:228px;top:419px">15</div>
<div class="a c" style="left:275px;top:420px">28Jan2016</div>
<div class="a c" style="left:349px;top:420px">1115</div>
<div class="a c" style="left:389px;top:420px">Invoice</div>
<div class="a c" style="left:655.5px;top:420px">Business Schools</div>
<div class="a" style="left:228px;top:436px;width:45px;height:1px;background:#ffffff"></div>
<div class="a" style="left:228px;top:454px;width:45px;height:1px;background:#a09c9c"></div>
<div class="a" style="left:274px;top:436px;width:626px;height:1px;background:#a09c9c"></div>
<div class="a" style="left:274px;top:436px;width:1px;height:19px;background:#a09c9c"></div>
<div class="a" style="left:275px;top:437px;width:71px;height:17px;background:#ffffff"></div>
<div class="a" style="left:275px;top:454px;width:71px;height:1px;background:#ffffff"></div>
<div class="a" style="left:346px;top:437px;width:1px;height:18px;background:#ffffff"></div>
<div class="a" style="left:347px;top:436px;width:1px;height:19px;background:#a09c9c"></div>
<div class="a" style="left:348px;top:437px;width:39px;height:17px;background:#ffffff"></div>
<div class="a" style="left:348px;top:454px;width:39px;height:1px;background:#ffffff"></div>
<div class="a" style="left:387px;top:437px;width:1px;height:18px;background:#ffffff"></div>
<div class="a" style="left:388px;top:436px;width:1px;height:19px;background:#a09c9c"></div>
<div class="a" style="left:389px;top:437px;width:65px;height:17px;background:#ffffff"></div>
<div class="a" style="left:389px;top:454px;width:65px;height:1px;background:#ffffff"></div>
<div class="a" style="left:454px;top:437px;width:1px;height:18px;background:#ffffff"></div>
<div class="a" style="left:455px;top:436px;width:1px;height:19px;background:#a09c9c"></div>
<div class="a" style="left:456px;top:437px;width:44px;height:17px;background:#ffffff"></div>
<div class="a" style="left:456px;top:454px;width:44px;height:1px;background:#ffffff"></div>
<div class="a" style="left:500px;top:437px;width:1px;height:18px;background:#ffffff"></div>
<div class="a" style="left:501px;top:436px;width:1px;height:19px;background:#a09c9c"></div>
<div class="a" style="left:502px;top:437px;width:41px;height:17px;background:#ffffff"></div>
<div class="a" style="left:502px;top:454px;width:41px;height:1px;background:#ffffff"></div>
<div class="a" style="left:543px;top:437px;width:1px;height:18px;background:#ffffff"></div>
<div class="a" style="left:544px;top:436px;width:1px;height:19px;background:#a09c9c"></div>
<div class="a" style="left:545px;top:437px;width:74px;height:17px;background:#ffffff"></div>
<div class="a" style="left:545px;top:454px;width:74px;height:1px;background:#ffffff"></div>
<div class="a" style="left:619px;top:437px;width:1px;height:18px;background:#ffffff"></div>
<div class="a" style="left:620px;top:436px;width:1px;height:19px;background:#a09c9c"></div>
<div class="a" style="left:621px;top:437px;width:190px;height:17px;background:#ffffff"></div>
<div class="a" style="left:621px;top:454px;width:190px;height:1px;background:#ffffff"></div>
<div class="a" style="left:811px;top:437px;width:1px;height:18px;background:#ffffff"></div>
<div class="a" style="left:812px;top:436px;width:1px;height:19px;background:#a09c9c"></div>
<div class="a" style="left:813px;top:437px;width:44px;height:17px;background:#ffffff"></div>
<div class="a" style="left:813px;top:454px;width:44px;height:1px;background:#ffffff"></div>
<div class="a" style="left:857px;top:437px;width:1px;height:18px;background:#ffffff"></div>
<div class="a" style="left:858px;top:436px;width:1px;height:19px;background:#a09c9c"></div>
<div class="a" style="left:859px;top:437px;width:41px;height:17px;background:#ffffff"></div>
<div class="a" style="left:859px;top:454px;width:41px;height:1px;background:#ffffff"></div>
<div class="a c" style="left:228px;top:438px">16</div>
<div class="a c" style="left:275px;top:439px">28Jan2016</div>
<div class="a c" style="left:349px;top:439px">1116</div>
<div class="a c" style="left:389px;top:439px">Invoice</div>
<div class="a c" style="left:666px;top:439px">nd &amp; Bernstein Adv.</div>
<div class="a" style="left:228px;top:455px;width:45px;height:1px;background:#ffffff"></div>
<div class="a" style="left:228px;top:473px;width:45px;height:1px;background:#a09c9c"></div>
<div class="a" style="left:274px;top:455px;width:626px;height:1px;background:#a09c9c"></div>
<div class="a" style="left:274px;top:455px;width:1px;height:19px;background:#a09c9c"></div>
<div class="a" style="left:275px;top:473px;width:71px;height:1px;background:#ffffff"></div>
<div class="a" style="left:346px;top:456px;width:1px;height:18px;background:#ffffff"></div>
<div class="a" style="left:347px;top:455px;width:1px;height:19px;background:#a09c9c"></div>
<div class="a" style="left:348px;top:473px;width:39px;height:1px;background:#ffffff"></div>
<div class="a" style="left:387px;top:456px;width:1px;height:18px;background:#ffffff"></div>
<div class="a" style="left:388px;top:455px;width:1px;height:19px;background:#a09c9c"></div>
<div class="a" style="left:389px;top:473px;width:65px;height:1px;background:#ffffff"></div>
<div class="a" style="left:454px;top:456px;width:1px;height:18px;background:#ffffff"></div>
<div class="a" style="left:455px;top:455px;width:1px;height:19px;background:#a09c9c"></div>
<div class="a" style="left:456px;top:473px;width:44px;height:1px;background:#ffffff"></div>
<div class="a" style="left:500px;top:456px;width:1px;height:18px;background:#ffffff"></div>
<div class="a" style="left:501px;top:455px;width:1px;height:19px;background:#a09c9c"></div>
<div class="a" style="left:502px;top:473px;width:41px;height:1px;background:#ffffff"></div>
<div class="a" style="left:543px;top:456px;width:1px;height:18px;background:#ffffff"></div>
<div class="a" style="left:544px;top:455px;width:1px;height:19px;background:#a09c9c"></div>
<div class="a" style="left:545px;top:473px;width:74px;height:1px;background:#ffffff"></div>
<div class="a" style="left:619px;top:456px;width:1px;height:18px;background:#ffffff"></div>
<div class="a" style="left:620px;top:455px;width:1px;height:19px;background:#a09c9c"></div>
<div class="a" style="left:621px;top:473px;width:190px;height:1px;background:#ffffff"></div>
<div class="a" style="left:811px;top:456px;width:1px;height:18px;background:#ffffff"></div>
<div class="a" style="left:812px;top:455px;width:1px;height:19px;background:#a09c9c"></div>
<div class="a" style="left:813px;top:473px;width:44px;height:1px;background:#ffffff"></div>
<div class="a" style="left:857px;top:456px;width:1px;height:18px;background:#ffffff"></div>
<div class="a" style="left:858px;top:455px;width:1px;height:19px;background:#a09c9c"></div>
<div class="a" style="left:859px;top:473px;width:41px;height:1px;background:#ffffff"></div>
<div class="a c" style="left:228px;top:457px">17</div>
<div class="a c" style="left:275px;top:458px">02Feb2016</div>
<div class="a c" style="left:349px;top:458px">1117</div>
<div class="a c" style="left:389px;top:458px">Invoice</div>
<div class="a c" style="left:651px;top:458px">Trust Emp. Pension Fund</div>
<div class="a" style="left:228px;top:474px;width:45px;height:1px;background:#ffffff"></div>
<div class="a" style="left:228px;top:492px;width:45px;height:1px;background:#a09c9c"></div>
<div class="a" style="left:274px;top:474px;width:626px;height:1px;background:#a09c9c"></div>
<div class="a" style="left:274px;top:474px;width:1px;height:19px;background:#a09c9c"></div>
<div class="a" style="left:275px;top:475px;width:71px;height:17px;background:#ffffff"></div>
<div class="a" style="left:275px;top:492px;width:71px;height:1px;background:#ffffff"></div>
<div class="a" style="left:346px;top:475px;width:1px;height:18px;background:#ffffff"></div>
<div class="a" style="left:347px;top:474px;width:1px;height:19px;background:#a09c9c"></div>
<div class="a" style="left:348px;top:475px;width:39px;height:17px;background:#ffffff"></div>
<div class="a" style="left:348px;top:492px;width:39px;height:1px;background:#ffffff"></div>
<div class="a" style="left:387px;top:475px;width:1px;height:18px;background:#ffffff"></div>
<div class="a" style="left:388px;top:474px;width:1px;height:19px;background:#a09c9c"></div>
<div class="a" style="left:389px;top:475px;width:65px;height:17px;background:#ffffff"></div>
<div class="a" style="left:389px;top:492px;width:65px;height:1px;background:#ffffff"></div>
<div class="a" style="left:454px;top:475px;width:1px;height:18px;background:#ffffff"></div>
<div class="a" style="left:455px;top:474px;width:1px;height:19px;background:#a09c9c"></div>
<div class="a" style="left:456px;top:475px;width:44px;height:17px;background:#ffffff"></div>
<div class="a" style="left:456px;top:492px;width:44px;height:1px;background:#ffffff"></div>
<div class="a" style="left:500px;top:475px;width:1px;height:18px;background:#ffffff"></div>
<div class="a" style="left:501px;top:474px;width:1px;height:19px;background:#a09c9c"></div>
<div class="a" style="left:502px;top:475px;width:41px;height:17px;background:#ffffff"></div>
<div class="a" style="left:502px;top:492px;width:41px;height:1px;background:#ffffff"></div>
<div class="a" style="left:543px;top:475px;width:1px;height:18px;background:#ffffff"></div>
<div class="a" style="left:544px;top:474px;width:1px;height:19px;background:#a09c9c"></div>
<div class="a" style="left:545px;top:475px;width:74px;height:17px;background:#ffffff"></div>
<div class="a" style="left:545px;top:492px;width:74px;height:1px;background:#ffffff"></div>
<div class="a" style="left:619px;top:475px;width:1px;height:18px;background:#ffffff"></div>
<div class="a" style="left:620px;top:474px;width:1px;height:19px;background:#a09c9c"></div>
<div class="a" style="left:621px;top:475px;width:190px;height:17px;background:#ffffff"></div>
<div class="a" style="left:621px;top:492px;width:190px;height:1px;background:#ffffff"></div>
<div class="a" style="left:811px;top:475px;width:1px;height:18px;background:#ffffff"></div>
<div class="a" style="left:812px;top:474px;width:1px;height:19px;background:#a09c9c"></div>
<div class="a" style="left:813px;top:475px;width:44px;height:17px;background:#ffffff"></div>
<div class="a" style="left:813px;top:492px;width:44px;height:1px;background:#ffffff"></div>
<div class="a" style="left:857px;top:475px;width:1px;height:18px;background:#ffffff"></div>
<div class="a" style="left:858px;top:474px;width:1px;height:19px;background:#a09c9c"></div>
<div class="a" style="left:859px;top:475px;width:41px;height:17px;background:#ffffff"></div>
<div class="a" style="left:859px;top:492px;width:41px;height:1px;background:#ffffff"></div>
<div class="a c" style="left:228px;top:476px">18</div>
<div class="a c" style="left:275px;top:477px">04Feb2016</div>
<div class="a c" style="left:349px;top:477px">1118</div>
<div class="a c" style="left:389px;top:477px">Invoice</div>
<div class="a c" style="left:545px;top:477px">OLSON</div>
<div class="a c" style="left:621px;top:477px">Olson Valley Conservation Grp</div>
<div class="a" style="left:228px;top:493px;width:45px;height:1px;background:#ffffff"></div>
<div class="a" style="left:228px;top:511px;width:45px;height:1px;background:#a09c9c"></div>
<div class="a" style="left:274px;top:493px;width:626px;height:1px;background:#a09c9c"></div>
<div class="a" style="left:274px;top:493px;width:1px;height:19px;background:#a09c9c"></div>
<div class="a" style="left:275px;top:511px;width:71px;height:1px;background:#ffffff"></div>
<div class="a" style="left:346px;top:494px;width:1px;height:18px;background:#ffffff"></div>
<div class="a" style="left:347px;top:493px;width:1px;height:19px;background:#a09c9c"></div>
<div class="a" style="left:348px;top:511px;width:39px;height:1px;background:#ffffff"></div>
<div class="a" style="left:387px;top:494px;width:1px;height:18px;background:#ffffff"></div>
<div class="a" style="left:388px;top:493px;width:1px;height:19px;background:#a09c9c"></div>
<div class="a" style="left:389px;top:511px;width:65px;height:1px;background:#ffffff"></div>
<div class="a" style="left:454px;top:494px;width:1px;height:18px;background:#ffffff"></div>
<div class="a" style="left:455px;top:493px;width:1px;height:19px;background:#a09c9c"></div>
<div class="a" style="left:456px;top:511px;width:44px;height:1px;background:#ffffff"></div>
<div class="a" style="left:500px;top:494px;width:1px;height:18px;background:#ffffff"></div>
<div class="a" style="left:501px;top:493px;width:1px;height:19px;background:#a09c9c"></div>
<div class="a" style="left:502px;top:511px;width:41px;height:1px;background:#ffffff"></div>
<div class="a" style="left:543px;top:494px;width:1px;height:18px;background:#ffffff"></div>
<div class="a" style="left:544px;top:493px;width:1px;height:19px;background:#a09c9c"></div>
<div class="a" style="left:545px;top:511px;width:74px;height:1px;background:#ffffff"></div>
<div class="a" style="left:619px;top:494px;width:1px;height:18px;background:#ffffff"></div>
<div class="a" style="left:620px;top:493px;width:1px;height:19px;background:#a09c9c"></div>
<div class="a" style="left:621px;top:511px;width:190px;height:1px;background:#ffffff"></div>
<div class="a" style="left:811px;top:494px;width:1px;height:18px;background:#ffffff"></div>
<div class="a" style="left:812px;top:493px;width:1px;height:19px;background:#a09c9c"></div>
<div class="a" style="left:813px;top:511px;width:44px;height:1px;background:#ffffff"></div>
<div class="a" style="left:857px;top:494px;width:1px;height:18px;background:#ffffff"></div>
<div class="a" style="left:858px;top:493px;width:1px;height:19px;background:#a09c9c"></div>
<div class="a" style="left:859px;top:511px;width:41px;height:1px;background:#ffffff"></div>
<div class="a c" style="left:228px;top:495px">19</div>
<div class="a c" style="left:275px;top:496px">07Feb2016</div>
<div class="a c" style="left:349px;top:496px">1119</div>
<div class="a c" style="left:389px;top:496px">Invoice</div>
<div class="a c" style="left:545px;top:496px">NATIONAL</div>
<div class="a c" style="left:621px;top:496px">National Housing Co-Op Assoc.</div>
<div class="a" style="left:347px;top:208px;width:330px;height:271px;background:#fff;border:2px solid #000"></div>
<div class="a" style="left:349px;top:210px;width:312px;height:16px;background:#000080"></div>
<div class="a" style="left:351px;top:212px;font-size:12px;line-height:12px;font-weight:bold;color:#fff;letter-spacing:-0.2px">Select Index</div>
<div class="a" style="left:661px;top:210px;width:14px;height:16px;background:#ececec;border-top:1px solid #fff;border-left:1px solid #fff;border-right:1px solid #707070;border-bottom:2px solid #707070"></div>
<svg style="left:661px;top:211px" width="14" height="15" viewBox="0 0 14 15"><path d="M3.2 3 L11.8 10.8 M11.8 3 L3.2 10.8" stroke="#000" stroke-width="1.6"/></svg>
<div class="a" style="left:362px;top:236px;width:293px;height:212px;border:1px solid #d4d4d4"></div>
<div class="a" style="left:369px;top:231px;padding:0 1px 0 0;background:#fff;font-size:12px;line-height:12px;color:#1a3ef0;letter-spacing:-0.6px">Sort Setup</div>
<div class="a lab" style="left:300px;width:167px;text-align:right;top:253px;word-spacing:1.5px">Index</div>
<div class="a" style="left:478px;top:249px;width:134px;height:19px;border:1px solid #7a7a7a;background:#fff"></div>
<div class="a lab" style="left:481px;top:253px;letter-spacing:-0.4px">.index/date</div>
<div class="a" style="left:620px;top:249px;width:20px;height:19px;border:1px solid #adadad;background:#e1e1e1"></div>
<svg style="left:620px;top:249px" width="20" height="19" viewBox="0 0 20 19"><rect x="4" y="4" width="1" height="1" fill="#d8a0d8"/><rect x="6" y="4" width="1" height="1" fill="#a8dca8"/><rect x="8" y="4" width="1" height="1" fill="#d8a0d8"/><rect x="10" y="4" width="1" height="1" fill="#a8dca8"/><rect x="12" y="4" width="1" height="1" fill="#d8a0d8"/><rect x="14" y="4" width="1" height="1" fill="#a8dca8"/><rect x="7" y="5" width="1" height="1" fill="#a8dca8"/><rect x="11" y="5" width="1" height="1" fill="#a8dca8"/><rect x="15" y="5" width="1" height="1" fill="#a8dca8"/><rect x="4" y="6" width="1" height="1" fill="#a8dca8"/><rect x="6" y="6" width="1" height="1" fill="#d8a0d8"/><rect x="10" y="6" width="1" height="1" fill="#d8a0d8"/><rect x="14" y="6" width="1" height="1" fill="#d8a0d8"/><rect x="5" y="7" width="1" height="1" fill="#a8dca8"/><rect x="9" y="7" width="1" height="1" fill="#a8dca8"/><rect x="13" y="7" width="1" height="1" fill="#a8dca8"/><rect x="15" y="7" width="1" height="1" fill="#d8a0d8"/><rect x="4" y="8" width="1" height="1" fill="#d8a0d8"/><rect x="8" y="8" width="1" height="1" fill="#d8a0d8"/><rect x="12" y="8" width="1" height="1" fill="#d8a0d8"/><rect x="7" y="9" width="1" height="1" fill="#a8dca8"/><rect x="11" y="9" width="1" height="1" fill="#a8dca8"/><rect x="15" y="9" width="1" height="1" fill="#a8dca8"/><rect x="4" y="10" width="1" height="1" fill="#a8dca8"/><rect x="6" y="10" width="1" height="1" fill="#d8a0d8"/><rect x="10" y="10" width="1" height="1" fill="#d8a0d8"/><rect x="14" y="10" width="1" height="1" fill="#d8a0d8"/><rect x="5" y="11" width="1" height="1" fill="#a8dca8"/><rect x="9" y="11" width="1" height="1" fill="#a8dca8"/><rect x="13" y="11" width="1" height="1" fill="#a8dca8"/><rect x="15" y="11" width="1" height="1" fill="#d8a0d8"/><rect x="4" y="12" width="1" height="1" fill="#d8a0d8"/><rect x="8" y="12" width="1" height="1" fill="#d8a0d8"/><rect x="12" y="12" width="1" height="1" fill="#d8a0d8"/><rect x="7" y="13" width="1" height="1" fill="#a8dca8"/><rect x="11" y="13" width="1" height="1" fill="#a8dca8"/><rect x="15" y="13" width="1" height="1" fill="#a8dca8"/><rect x="4" y="14" width="1" height="1" fill="#a8dca8"/><rect x="6" y="14" width="1" height="1" fill="#d8a0d8"/><rect x="8" y="14" width="1" height="1" fill="#a8dca8"/><rect x="10" y="14" width="1" height="1" fill="#d8a0d8"/><rect x="12" y="14" width="1" height="1" fill="#a8dca8"/><rect x="14" y="14" width="1" height="1" fill="#d8a0d8"/><path d="M4.5 7.8 Q4.5 7 5.3 7 H12.7 Q13.5 7 13.5 7.8 L9 12.6Z" fill="#000"/><rect x="8.8" y="8.2" width="1.3" height="1.3" fill="#fff"/></svg>
<div class="a lab" style="left:300px;width:167px;text-align:right;top:282px;word-spacing:1.5px">Sorted By</div>
<div class="a" style="left:478px;top:278px;width:134px;height:19px;border:1px solid #0078d7;background:#fff"></div>
<div class="a" style="left:481px;top:281px;width:27px;height:13px;background:#3390ff"></div>
<div class="a lab" style="left:481px;top:282px;color:#fff;letter-spacing:-0.4px">/date</div>
<div class="a" style="left:620px;top:278px;width:20px;height:19px;border:1px solid #adadad;background:#e1e1e1"></div>
<svg style="left:620px;top:278px" width="20" height="19" viewBox="0 0 20 19"><rect x="4" y="4" width="1" height="1" fill="#d8a0d8"/><rect x="6" y="4" width="1" height="1" fill="#a8dca8"/><rect x="8" y="4" width="1" height="1" fill="#d8a0d8"/><rect x="10" y="4" width="1" height="1" fill="#a8dca8"/><rect x="12" y="4" width="1" height="1" fill="#d8a0d8"/><rect x="14" y="4" width="1" height="1" fill="#a8dca8"/><rect x="7" y="5" width="1" height="1" fill="#a8dca8"/><rect x="11" y="5" width="1" height="1" fill="#a8dca8"/><rect x="15" y="5" width="1" height="1" fill="#a8dca8"/><rect x="4" y="6" width="1" height="1" fill="#a8dca8"/><rect x="6" y="6" width="1" height="1" fill="#d8a0d8"/><rect x="10" y="6" width="1" height="1" fill="#d8a0d8"/><rect x="14" y="6" width="1" height="1" fill="#d8a0d8"/><rect x="5" y="7" width="1" height="1" fill="#a8dca8"/><rect x="9" y="7" width="1" height="1" fill="#a8dca8"/><rect x="13" y="7" width="1" height="1" fill="#a8dca8"/><rect x="15" y="7" width="1" height="1" fill="#d8a0d8"/><rect x="4" y="8" width="1" height="1" fill="#d8a0d8"/><rect x="8" y="8" width="1" height="1" fill="#d8a0d8"/><rect x="12" y="8" width="1" height="1" fill="#d8a0d8"/><rect x="7" y="9" width="1" height="1" fill="#a8dca8"/><rect x="11" y="9" width="1" height="1" fill="#a8dca8"/><rect x="15" y="9" width="1" height="1" fill="#a8dca8"/><rect x="4" y="10" width="1" height="1" fill="#a8dca8"/><rect x="6" y="10" width="1" height="1" fill="#d8a0d8"/><rect x="10" y="10" width="1" height="1" fill="#d8a0d8"/><rect x="14" y="10" width="1" height="1" fill="#d8a0d8"/><rect x="5" y="11" width="1" height="1" fill="#a8dca8"/><rect x="9" y="11" width="1" height="1" fill="#a8dca8"/><rect x="13" y="11" width="1" height="1" fill="#a8dca8"/><rect x="15" y="11" width="1" height="1" fill="#d8a0d8"/><rect x="4" y="12" width="1" height="1" fill="#d8a0d8"/><rect x="8" y="12" width="1" height="1" fill="#d8a0d8"/><rect x="12" y="12" width="1" height="1" fill="#d8a0d8"/><rect x="7" y="13" width="1" height="1" fill="#a8dca8"/><rect x="11" y="13" width="1" height="1" fill="#a8dca8"/><rect x="15" y="13" width="1" height="1" fill="#a8dca8"/><rect x="4" y="14" width="1" height="1" fill="#a8dca8"/><rect x="6" y="14" width="1" height="1" fill="#d8a0d8"/><rect x="8" y="14" width="1" height="1" fill="#a8dca8"/><rect x="10" y="14" width="1" height="1" fill="#d8a0d8"/><rect x="12" y="14" width="1" height="1" fill="#a8dca8"/><rect x="14" y="14" width="1" height="1" fill="#d8a0d8"/><path d="M4.5 7.8 Q4.5 7 5.3 7 H12.7 Q13.5 7 13.5 7.8 L9 12.6Z" fill="#000"/><rect x="8.8" y="8.2" width="1.3" height="1.3" fill="#fff"/></svg>
<div class="a lab" style="left:300px;width:167px;text-align:right;top:311px;word-spacing:1.5px">Select</div>
<div class="a" style="left:478px;top:307px;width:134px;height:19px;border:1px solid #7a7a7a;background:#fff"></div>
<div class="a" style="left:620px;top:307px;width:20px;height:19px;border:1px solid #adadad;background:#e1e1e1"></div>
<svg style="left:620px;top:307px" width="20" height="19" viewBox="0 0 20 19"><rect x="4" y="4" width="1" height="1" fill="#d8a0d8"/><rect x="6" y="4" width="1" height="1" fill="#a8dca8"/><rect x="8" y="4" width="1" height="1" fill="#d8a0d8"/><rect x="10" y="4" width="1" height="1" fill="#a8dca8"/><rect x="12" y="4" width="1" height="1" fill="#d8a0d8"/><rect x="14" y="4" width="1" height="1" fill="#a8dca8"/><rect x="7" y="5" width="1" height="1" fill="#a8dca8"/><rect x="11" y="5" width="1" height="1" fill="#a8dca8"/><rect x="15" y="5" width="1" height="1" fill="#a8dca8"/><rect x="4" y="6" width="1" height="1" fill="#a8dca8"/><rect x="6" y="6" width="1" height="1" fill="#d8a0d8"/><rect x="10" y="6" width="1" height="1" fill="#d8a0d8"/><rect x="14" y="6" width="1" height="1" fill="#d8a0d8"/><rect x="5" y="7" width="1" height="1" fill="#a8dca8"/><rect x="9" y="7" width="1" height="1" fill="#a8dca8"/><rect x="13" y="7" width="1" height="1" fill="#a8dca8"/><rect x="15" y="7" width="1" height="1" fill="#d8a0d8"/><rect x="4" y="8" width="1" height="1" fill="#d8a0d8"/><rect x="8" y="8" width="1" height="1" fill="#d8a0d8"/><rect x="12" y="8" width="1" height="1" fill="#d8a0d8"/><rect x="7" y="9" width="1" height="1" fill="#a8dca8"/><rect x="11" y="9" width="1" height="1" fill="#a8dca8"/><rect x="15" y="9" width="1" height="1" fill="#a8dca8"/><rect x="4" y="10" width="1" height="1" fill="#a8dca8"/><rect x="6" y="10" width="1" height="1" fill="#d8a0d8"/><rect x="10" y="10" width="1" height="1" fill="#d8a0d8"/><rect x="14" y="10" width="1" height="1" fill="#d8a0d8"/><rect x="5" y="11" width="1" height="1" fill="#a8dca8"/><rect x="9" y="11" width="1" height="1" fill="#a8dca8"/><rect x="13" y="11" width="1" height="1" fill="#a8dca8"/><rect x="15" y="11" width="1" height="1" fill="#d8a0d8"/><rect x="4" y="12" width="1" height="1" fill="#d8a0d8"/><rect x="8" y="12" width="1" height="1" fill="#d8a0d8"/><rect x="12" y="12" width="1" height="1" fill="#d8a0d8"/><rect x="7" y="13" width="1" height="1" fill="#a8dca8"/><rect x="11" y="13" width="1" height="1" fill="#a8dca8"/><rect x="15" y="13" width="1" height="1" fill="#a8dca8"/><rect x="4" y="14" width="1" height="1" fill="#a8dca8"/><rect x="6" y="14" width="1" height="1" fill="#d8a0d8"/><rect x="8" y="14" width="1" height="1" fill="#a8dca8"/><rect x="10" y="14" width="1" height="1" fill="#d8a0d8"/><rect x="12" y="14" width="1" height="1" fill="#a8dca8"/><rect x="14" y="14" width="1" height="1" fill="#d8a0d8"/><path d="M4.5 7.8 Q4.5 7 5.3 7 H12.7 Q13.5 7 13.5 7.8 L9 12.6Z" fill="#000"/><rect x="8.8" y="8.2" width="1.3" height="1.3" fill="#fff"/></svg>
<div class="a lab" style="left:300px;width:167px;text-align:right;top:340px;word-spacing:1.5px">Begin Tag</div>
<div class="a" style="left:478px;top:336px;width:134px;height:19px;border:1px solid #7a7a7a;background:#fff"></div>
<div class="a lab" style="left:481px;top:340px;letter-spacing:-0.4px">financial</div>
<div class="a" style="left:620px;top:336px;width:20px;height:19px;border:1px solid #adadad;background:#e1e1e1"></div>
<svg style="left:620px;top:336px" width="20" height="19" viewBox="0 0 20 19"><rect x="4" y="4" width="1" height="1" fill="#d8a0d8"/><rect x="6" y="4" width="1" height="1" fill="#a8dca8"/><rect x="8" y="4" width="1" height="1" fill="#d8a0d8"/><rect x="10" y="4" width="1" height="1" fill="#a8dca8"/><rect x="12" y="4" width="1" height="1" fill="#d8a0d8"/><rect x="14" y="4" width="1" height="1" fill="#a8dca8"/><rect x="7" y="5" width="1" height="1" fill="#a8dca8"/><rect x="11" y="5" width="1" height="1" fill="#a8dca8"/><rect x="15" y="5" width="1" height="1" fill="#a8dca8"/><rect x="4" y="6" width="1" height="1" fill="#a8dca8"/><rect x="6" y="6" width="1" height="1" fill="#d8a0d8"/><rect x="10" y="6" width="1" height="1" fill="#d8a0d8"/><rect x="14" y="6" width="1" height="1" fill="#d8a0d8"/><rect x="5" y="7" width="1" height="1" fill="#a8dca8"/><rect x="9" y="7" width="1" height="1" fill="#a8dca8"/><rect x="13" y="7" width="1" height="1" fill="#a8dca8"/><rect x="15" y="7" width="1" height="1" fill="#d8a0d8"/><rect x="4" y="8" width="1" height="1" fill="#d8a0d8"/><rect x="8" y="8" width="1" height="1" fill="#d8a0d8"/><rect x="12" y="8" width="1" height="1" fill="#d8a0d8"/><rect x="7" y="9" width="1" height="1" fill="#a8dca8"/><rect x="11" y="9" width="1" height="1" fill="#a8dca8"/><rect x="15" y="9" width="1" height="1" fill="#a8dca8"/><rect x="4" y="10" width="1" height="1" fill="#a8dca8"/><rect x="6" y="10" width="1" height="1" fill="#d8a0d8"/><rect x="10" y="10" width="1" height="1" fill="#d8a0d8"/><rect x="14" y="10" width="1" height="1" fill="#d8a0d8"/><rect x="5" y="11" width="1" height="1" fill="#a8dca8"/><rect x="9" y="11" width="1" height="1" fill="#a8dca8"/><rect x="13" y="11" width="1" height="1" fill="#a8dca8"/><rect x="15" y="11" width="1" height="1" fill="#d8a0d8"/><rect x="4" y="12" width="1" height="1" fill="#d8a0d8"/><rect x="8" y="12" width="1" height="1" fill="#d8a0d8"/><rect x="12" y="12" width="1" height="1" fill="#d8a0d8"/><rect x="7" y="13" width="1" height="1" fill="#a8dca8"/><rect x="11" y="13" width="1" height="1" fill="#a8dca8"/><rect x="15" y="13" width="1" height="1" fill="#a8dca8"/><rect x="4" y="14" width="1" height="1" fill="#a8dca8"/><rect x="6" y="14" width="1" height="1" fill="#d8a0d8"/><rect x="8" y="14" width="1" height="1" fill="#a8dca8"/><rect x="10" y="14" width="1" height="1" fill="#d8a0d8"/><rect x="12" y="14" width="1" height="1" fill="#a8dca8"/><rect x="14" y="14" width="1" height="1" fill="#d8a0d8"/><path d="M4.5 7.8 Q4.5 7 5.3 7 H12.7 Q13.5 7 13.5 7.8 L9 12.6Z" fill="#000"/><rect x="8.8" y="8.2" width="1.3" height="1.3" fill="#fff"/></svg>
<div class="a lab" style="left:300px;width:167px;text-align:right;top:369px;word-spacing:1.5px">End Tag</div>
<div class="a" style="left:478px;top:365px;width:134px;height:19px;border:1px solid #7a7a7a;background:#fff"></div>
<div class="a lab" style="left:481px;top:369px;letter-spacing:-0.4px">financial</div>
<div class="a" style="left:620px;top:365px;width:20px;height:19px;border:1px solid #adadad;background:#e1e1e1"></div>
<svg style="left:620px;top:365px" width="20" height="19" viewBox="0 0 20 19"><rect x="4" y="4" width="1" height="1" fill="#d8a0d8"/><rect x="6" y="4" width="1" height="1" fill="#a8dca8"/><rect x="8" y="4" width="1" height="1" fill="#d8a0d8"/><rect x="10" y="4" width="1" height="1" fill="#a8dca8"/><rect x="12" y="4" width="1" height="1" fill="#d8a0d8"/><rect x="14" y="4" width="1" height="1" fill="#a8dca8"/><rect x="7" y="5" width="1" height="1" fill="#a8dca8"/><rect x="11" y="5" width="1" height="1" fill="#a8dca8"/><rect x="15" y="5" width="1" height="1" fill="#a8dca8"/><rect x="4" y="6" width="1" height="1" fill="#a8dca8"/><rect x="6" y="6" width="1" height="1" fill="#d8a0d8"/><rect x="10" y="6" width="1" height="1" fill="#d8a0d8"/><rect x="14" y="6" width="1" height="1" fill="#d8a0d8"/><rect x="5" y="7" width="1" height="1" fill="#a8dca8"/><rect x="9" y="7" width="1" height="1" fill="#a8dca8"/><rect x="13" y="7" width="1" height="1" fill="#a8dca8"/><rect x="15" y="7" width="1" height="1" fill="#d8a0d8"/><rect x="4" y="8" width="1" height="1" fill="#d8a0d8"/><rect x="8" y="8" width="1" height="1" fill="#d8a0d8"/><rect x="12" y="8" width="1" height="1" fill="#d8a0d8"/><rect x="7" y="9" width="1" height="1" fill="#a8dca8"/><rect x="11" y="9" width="1" height="1" fill="#a8dca8"/><rect x="15" y="9" width="1" height="1" fill="#a8dca8"/><rect x="4" y="10" width="1" height="1" fill="#a8dca8"/><rect x="6" y="10" width="1" height="1" fill="#d8a0d8"/><rect x="10" y="10" width="1" height="1" fill="#d8a0d8"/><rect x="14" y="10" width="1" height="1" fill="#d8a0d8"/><rect x="5" y="11" width="1" height="1" fill="#a8dca8"/><rect x="9" y="11" width="1" height="1" fill="#a8dca8"/><rect x="13" y="11" width="1" height="1" fill="#a8dca8"/><rect x="15" y="11" width="1" height="1" fill="#d8a0d8"/><rect x="4" y="12" width="1" height="1" fill="#d8a0d8"/><rect x="8" y="12" width="1" height="1" fill="#d8a0d8"/><rect x="12" y="12" width="1" height="1" fill="#d8a0d8"/><rect x="7" y="13" width="1" height="1" fill="#a8dca8"/><rect x="11" y="13" width="1" height="1" fill="#a8dca8"/><rect x="15" y="13" width="1" height="1" fill="#a8dca8"/><rect x="4" y="14" width="1" height="1" fill="#a8dca8"/><rect x="6" y="14" width="1" height="1" fill="#d8a0d8"/><rect x="8" y="14" width="1" height="1" fill="#a8dca8"/><rect x="10" y="14" width="1" height="1" fill="#d8a0d8"/><rect x="12" y="14" width="1" height="1" fill="#a8dca8"/><rect x="14" y="14" width="1" height="1" fill="#d8a0d8"/><path d="M4.5 7.8 Q4.5 7 5.3 7 H12.7 Q13.5 7 13.5 7.8 L9 12.6Z" fill="#000"/><rect x="8.8" y="8.2" width="1.3" height="1.3" fill="#fff"/></svg>
<div class="a lab" style="left:300px;width:167px;text-align:right;top:398px;word-spacing:1.5px">Begin Date</div>
<div class="a" style="left:478px;top:394px;width:134px;height:19px;border:1px solid #7a7a7a;background:#fff"></div>
<div class="a" style="left:620px;top:394px;width:20px;height:19px;border:1px solid #adadad;background:#e1e1e1"></div>
<svg style="left:620px;top:394px" width="20" height="19" viewBox="0 0 20 19"><rect x="4" y="4" width="1" height="1" fill="#d8a0d8"/><rect x="6" y="4" width="1" height="1" fill="#a8dca8"/><rect x="8" y="4" width="1" height="1" fill="#d8a0d8"/><rect x="10" y="4" width="1" height="1" fill="#a8dca8"/><rect x="12" y="4" width="1" height="1" fill="#d8a0d8"/><rect x="14" y="4" width="1" height="1" fill="#a8dca8"/><rect x="7" y="5" width="1" height="1" fill="#a8dca8"/><rect x="11" y="5" width="1" height="1" fill="#a8dca8"/><rect x="15" y="5" width="1" height="1" fill="#a8dca8"/><rect x="4" y="6" width="1" height="1" fill="#a8dca8"/><rect x="6" y="6" width="1" height="1" fill="#d8a0d8"/><rect x="10" y="6" width="1" height="1" fill="#d8a0d8"/><rect x="14" y="6" width="1" height="1" fill="#d8a0d8"/><rect x="5" y="7" width="1" height="1" fill="#a8dca8"/><rect x="9" y="7" width="1" height="1" fill="#a8dca8"/><rect x="13" y="7" width="1" height="1" fill="#a8dca8"/><rect x="15" y="7" width="1" height="1" fill="#d8a0d8"/><rect x="4" y="8" width="1" height="1" fill="#d8a0d8"/><rect x="8" y="8" width="1" height="1" fill="#d8a0d8"/><rect x="12" y="8" width="1" height="1" fill="#d8a0d8"/><rect x="7" y="9" width="1" height="1" fill="#a8dca8"/><rect x="11" y="9" width="1" height="1" fill="#a8dca8"/><rect x="15" y="9" width="1" height="1" fill="#a8dca8"/><rect x="4" y="10" width="1" height="1" fill="#a8dca8"/><rect x="6" y="10" width="1" height="1" fill="#d8a0d8"/><rect x="10" y="10" width="1" height="1" fill="#d8a0d8"/><rect x="14" y="10" width="1" height="1" fill="#d8a0d8"/><rect x="5" y="11" width="1" height="1" fill="#a8dca8"/><rect x="9" y="11" width="1" height="1" fill="#a8dca8"/><rect x="13" y="11" width="1" height="1" fill="#a8dca8"/><rect x="15" y="11" width="1" height="1" fill="#d8a0d8"/><rect x="4" y="12" width="1" height="1" fill="#d8a0d8"/><rect x="8" y="12" width="1" height="1" fill="#d8a0d8"/><rect x="12" y="12" width="1" height="1" fill="#d8a0d8"/><rect x="7" y="13" width="1" height="1" fill="#a8dca8"/><rect x="11" y="13" width="1" height="1" fill="#a8dca8"/><rect x="15" y="13" width="1" height="1" fill="#a8dca8"/><rect x="4" y="14" width="1" height="1" fill="#a8dca8"/><rect x="6" y="14" width="1" height="1" fill="#d8a0d8"/><rect x="8" y="14" width="1" height="1" fill="#a8dca8"/><rect x="10" y="14" width="1" height="1" fill="#d8a0d8"/><rect x="12" y="14" width="1" height="1" fill="#a8dca8"/><rect x="14" y="14" width="1" height="1" fill="#d8a0d8"/><path d="M4.5 7.8 Q4.5 7 5.3 7 H12.7 Q13.5 7 13.5 7.8 L9 12.6Z" fill="#000"/><rect x="8.8" y="8.2" width="1.3" height="1.3" fill="#fff"/></svg>
<div class="a lab" style="left:300px;width:167px;text-align:right;top:427px;word-spacing:1.5px">End Date</div>
<div class="a" style="left:478px;top:423px;width:134px;height:19px;border:1px solid #7a7a7a;background:#fff"></div>
<div class="a" style="left:620px;top:423px;width:20px;height:19px;border:1px solid #adadad;background:#e1e1e1"></div>
<svg style="left:620px;top:423px" width="20" height="19" viewBox="0 0 20 19"><rect x="4" y="4" width="1" height="1" fill="#d8a0d8"/><rect x="6" y="4" width="1" height="1" fill="#a8dca8"/><rect x="8" y="4" width="1" height="1" fill="#d8a0d8"/><rect x="10" y="4" width="1" height="1" fill="#a8dca8"/><rect x="12" y="4" width="1" height="1" fill="#d8a0d8"/><rect x="14" y="4" width="1" height="1" fill="#a8dca8"/><rect x="7" y="5" width="1" height="1" fill="#a8dca8"/><rect x="11" y="5" width="1" height="1" fill="#a8dca8"/><rect x="15" y="5" width="1" height="1" fill="#a8dca8"/><rect x="4" y="6" width="1" height="1" fill="#a8dca8"/><rect x="6" y="6" width="1" height="1" fill="#d8a0d8"/><rect x="10" y="6" width="1" height="1" fill="#d8a0d8"/><rect x="14" y="6" width="1" height="1" fill="#d8a0d8"/><rect x="5" y="7" width="1" height="1" fill="#a8dca8"/><rect x="9" y="7" width="1" height="1" fill="#a8dca8"/><rect x="13" y="7" width="1" height="1" fill="#a8dca8"/><rect x="15" y="7" width="1" height="1" fill="#d8a0d8"/><rect x="4" y="8" width="1" height="1" fill="#d8a0d8"/><rect x="8" y="8" width="1" height="1" fill="#d8a0d8"/><rect x="12" y="8" width="1" height="1" fill="#d8a0d8"/><rect x="7" y="9" width="1" height="1" fill="#a8dca8"/><rect x="11" y="9" width="1" height="1" fill="#a8dca8"/><rect x="15" y="9" width="1" height="1" fill="#a8dca8"/><rect x="4" y="10" width="1" height="1" fill="#a8dca8"/><rect x="6" y="10" width="1" height="1" fill="#d8a0d8"/><rect x="10" y="10" width="1" height="1" fill="#d8a0d8"/><rect x="14" y="10" width="1" height="1" fill="#d8a0d8"/><rect x="5" y="11" width="1" height="1" fill="#a8dca8"/><rect x="9" y="11" width="1" height="1" fill="#a8dca8"/><rect x="13" y="11" width="1" height="1" fill="#a8dca8"/><rect x="15" y="11" width="1" height="1" fill="#d8a0d8"/><rect x="4" y="12" width="1" height="1" fill="#d8a0d8"/><rect x="8" y="12" width="1" height="1" fill="#d8a0d8"/><rect x="12" y="12" width="1" height="1" fill="#d8a0d8"/><rect x="7" y="13" width="1" height="1" fill="#a8dca8"/><rect x="11" y="13" width="1" height="1" fill="#a8dca8"/><rect x="15" y="13" width="1" height="1" fill="#a8dca8"/><rect x="4" y="14" width="1" height="1" fill="#a8dca8"/><rect x="6" y="14" width="1" height="1" fill="#d8a0d8"/><rect x="8" y="14" width="1" height="1" fill="#a8dca8"/><rect x="10" y="14" width="1" height="1" fill="#d8a0d8"/><rect x="12" y="14" width="1" height="1" fill="#a8dca8"/><rect x="14" y="14" width="1" height="1" fill="#d8a0d8"/><path d="M4.5 7.8 Q4.5 7 5.3 7 H12.7 Q13.5 7 13.5 7.8 L9 12.6Z" fill="#000"/><rect x="8.8" y="8.2" width="1.3" height="1.3" fill="#fff"/></svg>
<div class="a" style="left:0;top:27px;width:1px;height:473px;background:#a8b0bc"></div>
<div class="a" style="left:0;top:0;width:900px;height:1px;background:#5a9ad8"></div>
</body></html>
